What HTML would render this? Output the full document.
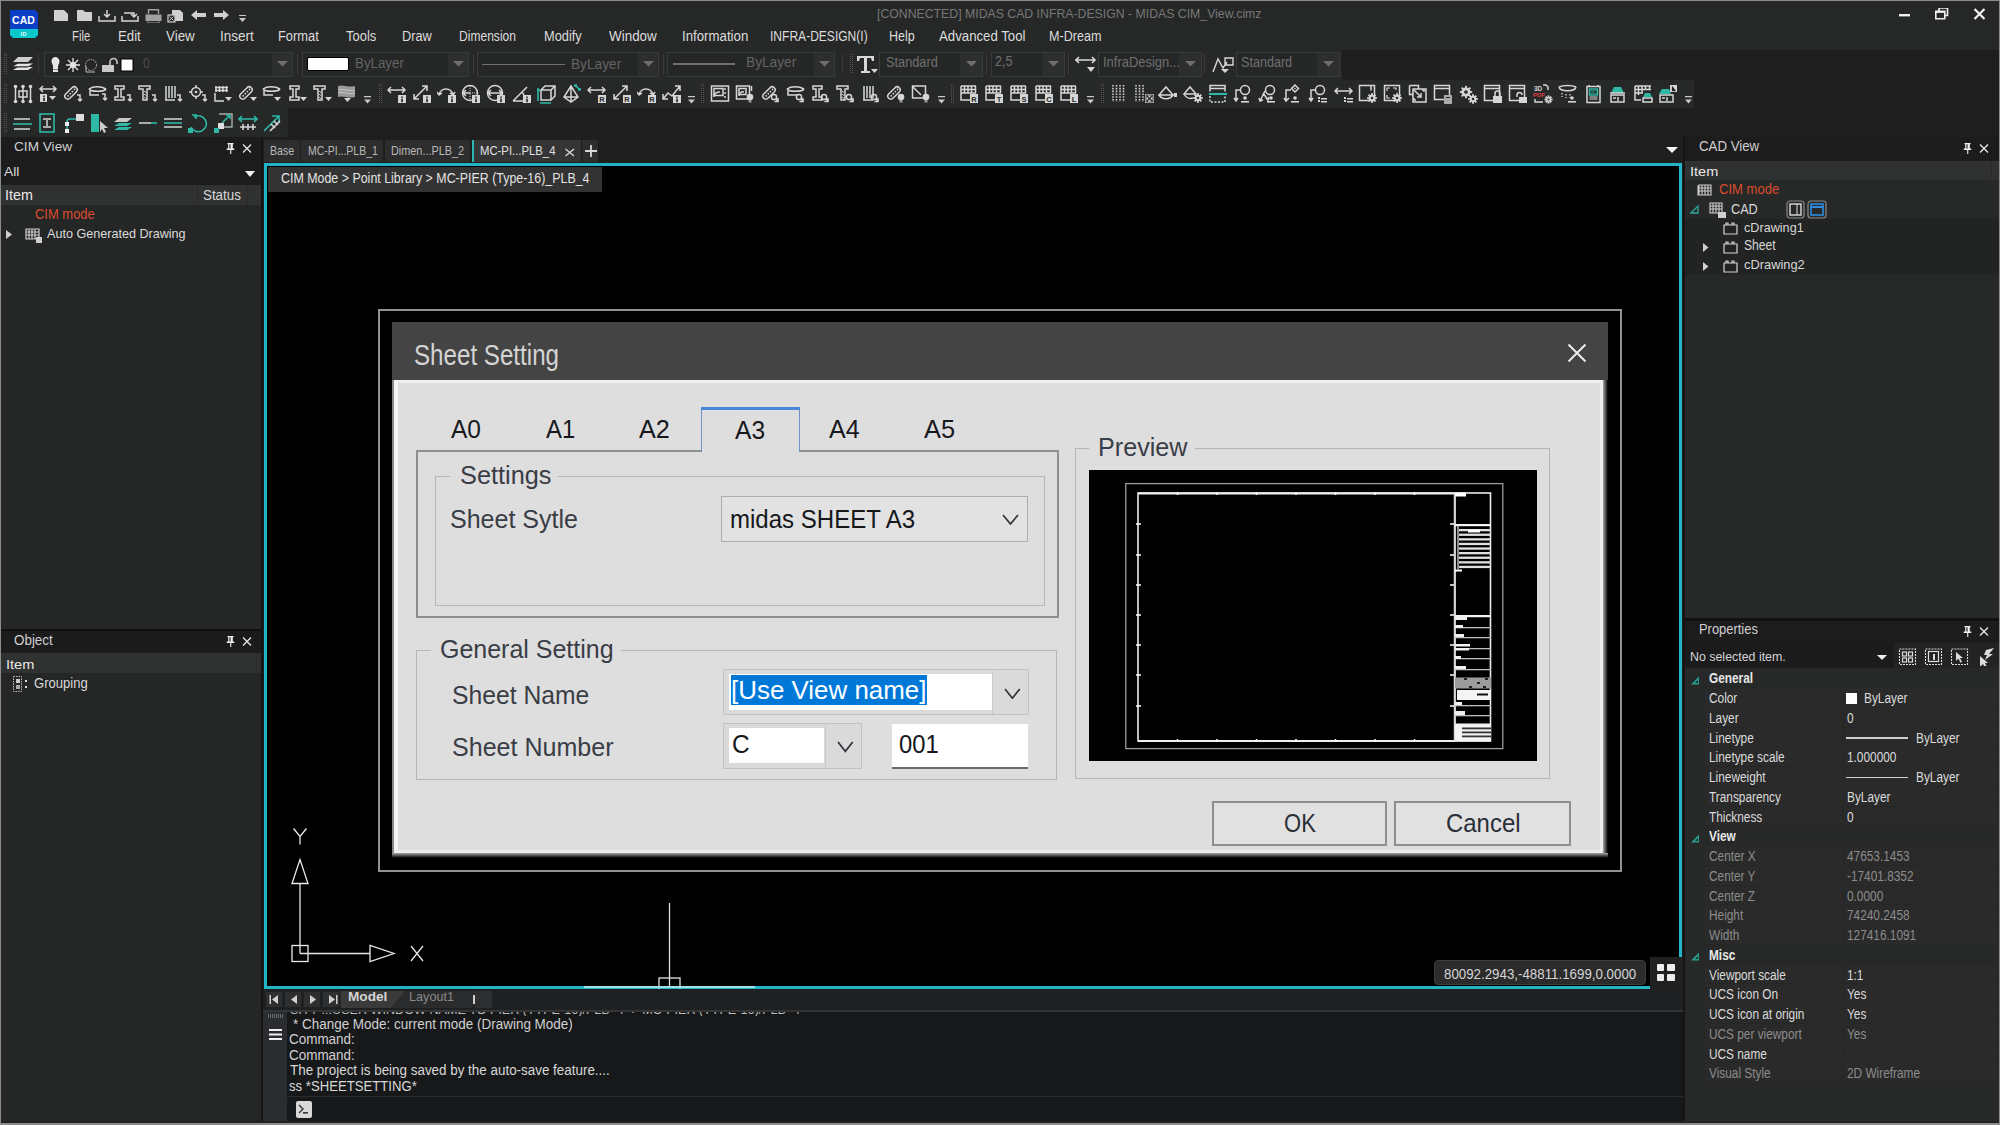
<!DOCTYPE html>
<html><head><meta charset="utf-8">
<style>
*{box-sizing:border-box;margin:0;padding:0}
html,body{width:2000px;height:1125px;overflow:hidden;background:#8c8c8c}
body{font-family:"Liberation Sans",sans-serif;position:relative}
.a{position:absolute;display:block}
.t{position:absolute;white-space:nowrap;line-height:1;transform-origin:0 0}
</style></head><body>
<div class="a" style="left:1px;top:1px;width:1998px;height:1122px;background:#1e1e1e;"></div>
<div class="a" style="left:1px;top:1px;width:1998px;height:49px;background:#262727;"></div>
<div class="a" style="left:1px;top:50px;width:1341px;height:30px;background:#272828;"></div>
<div class="a" style="left:1px;top:80px;width:1693px;height:28px;background:#272828;"></div>
<div class="a" style="left:1px;top:108px;width:287px;height:29px;background:#272828;"></div>
<svg class="a" style="left:9px;top:9px;" width="30" height="30" viewBox="0 0 30 30"><path d="M1 1h25l3 3v22l-3 3H4l-3-3z" fill="#0a3ec4"/><path d="M1 20h28v6l-3 3H4l-3-3z" fill="#0ac8cc"/><text x="14.5" y="14.8" font-family="Liberation Sans" font-weight="bold" font-size="10" fill="#fff" text-anchor="middle" transform="translate(14.5 0) scale(1.05 1) translate(-14.5 0)">CAD</text><text x="14.5" y="27" font-family="Liberation Sans" font-weight="bold" font-size="6" fill="#d8ffff" text-anchor="middle">ID</text></svg>
<svg class="a" style="left:53px;top:9px;" width="16" height="13" viewBox="0 0 16 13"><path fill="#d0d0d0" d="M1 1h10l4 4v7H1z"/></svg>
<svg class="a" style="left:76px;top:9px;" width="17" height="13" viewBox="0 0 17 13"><path fill="#d0d0d0" d="M1 1h6l2 2h7v9H1z"/></svg>
<svg class="a" style="left:98px;top:9px;" width="18" height="14" viewBox="0 0 18 14"><path stroke="#d6d6d6" fill="none" stroke-width="1.5" d="M1 7v5h16V7M9 1v7M6 5l3 3 3-3"/></svg>
<svg class="a" style="left:121px;top:9px;" width="18" height="14" viewBox="0 0 18 14"><path stroke="#d6d6d6" fill="none" stroke-width="1.5" d="M1 7v5h16V7M3 4h10v4M10 5l3 3 3-3"/></svg>
<svg class="a" style="left:145px;top:9px;" width="17" height="14" viewBox="0 0 17 14"><path fill="none" stroke="#a0a0a0" stroke-width="1.4" d="M3.5 5V0.7h10V5"/><path fill="#a0a0a0" d="M0.5 5.5h16v6.5h-16z"/><path fill="none" stroke="#a0a0a0" stroke-width="1.2" d="M3 12.5v1.5h11v-1.5"/></svg>
<svg class="a" style="left:167px;top:9px;" width="17" height="14" viewBox="0 0 17 14"><path fill="#d0d0d0" d="M5 1h8l3 3v8H5z"/><rect x="1" y="6" width="7" height="7" fill="#252627" stroke="#d0d0d0" stroke-width="1.2"/><path stroke="#d0d0d0" stroke-width="1" d="M2.5 7.5l4 4M6.5 7.5l-4 4"/></svg>
<svg class="a" style="left:191px;top:9px;" width="15" height="12" viewBox="0 0 15 12"><path fill="#d0d0d0" d="M0 6l6-5v3h9v4H6v3z"/></svg>
<svg class="a" style="left:214px;top:9px;" width="15" height="12" viewBox="0 0 15 12"><path fill="#d0d0d0" d="M15 6l-6-5v3H0v4h9v3z"/></svg>
<svg class="a" style="left:239px;top:15px;" width="7" height="8" viewBox="0 0 7 8"><path fill="#c8c8c8" d="M0 0h7v1H0zM0 3h7l-3.5 4z"/></svg>
<div class="t" style="left:876.50px;top:6.54px;font-size:13.48px;color:#777777;transform:scaleX(0.9115);">[CONNECTED] MIDAS CAD INFRA-DESIGN - MIDAS CIM_View.cimz</div>
<svg class="a" style="left:1898px;top:8px;" width="90" height="14" viewBox="0 0 90 14"><rect x="1" y="6" width="11" height="2.4" fill="#f0f0f0"/><path stroke="#f0f0f0" stroke-width="1.6" fill="none" d="M37.8 3.2h9v7.5h-9zM41 3V0h8.5v7.5h-2.7"/><path stroke="#f0f0f0" stroke-width="1" d="M37.8 4.4h9"/><path stroke="#f0f0f0" stroke-width="2.2" d="M76.5 1l10 10M86.5 1l-10 10"/></svg>
<div class="t" style="left:72.00px;top:29.97px;font-size:13.91px;color:#dcdcdc;transform:scaleX(0.8108);">File</div>
<div class="t" style="left:117.50px;top:29.97px;font-size:13.91px;color:#dcdcdc;transform:scaleX(0.9508);">Edit</div>
<div class="t" style="left:165.50px;top:29.97px;font-size:13.91px;color:#dcdcdc;transform:scaleX(0.9632);">View</div>
<div class="t" style="left:220.00px;top:29.97px;font-size:13.91px;color:#dcdcdc;transform:scaleX(0.9717);">Insert</div>
<div class="t" style="left:277.70px;top:29.97px;font-size:13.91px;color:#dcdcdc;transform:scaleX(0.9253);">Format</div>
<div class="t" style="left:345.50px;top:29.97px;font-size:13.91px;color:#dcdcdc;transform:scaleX(0.9322);">Tools</div>
<div class="t" style="left:402.00px;top:29.97px;font-size:13.91px;color:#dcdcdc;transform:scaleX(0.9168);">Draw</div>
<div class="t" style="left:458.60px;top:29.97px;font-size:13.91px;color:#dcdcdc;transform:scaleX(0.8676);">Dimension</div>
<div class="t" style="left:544.30px;top:29.97px;font-size:13.91px;color:#dcdcdc;transform:scaleX(0.9217);">Modify</div>
<div class="t" style="left:609.00px;top:29.97px;font-size:13.91px;color:#dcdcdc;transform:scaleX(0.9661);">Window</div>
<div class="t" style="left:682.00px;top:29.97px;font-size:13.91px;color:#dcdcdc;transform:scaleX(0.9525);">Information</div>
<div class="t" style="left:769.50px;top:29.97px;font-size:13.91px;color:#dcdcdc;transform:scaleX(0.8660);">INFRA-DESIGN(I)</div>
<div class="t" style="left:889.00px;top:29.97px;font-size:13.91px;color:#dcdcdc;transform:scaleX(0.8999);">Help</div>
<div class="t" style="left:939.00px;top:29.97px;font-size:13.91px;color:#dcdcdc;transform:scaleX(0.9510);">Advanced Tool</div>
<div class="t" style="left:1048.80px;top:29.97px;font-size:13.91px;color:#dcdcdc;transform:scaleX(0.9049);">M-Dream</div>
<svg class="a" style="left:3.5px;top:53px;" width="4" height="22" viewBox="0 0 4 22"><rect x="0" y="0" width="1" height="1" fill="#555"/><rect x="2" y="0" width="1" height="1" fill="#555"/><rect x="0" y="2" width="1" height="1" fill="#555"/><rect x="2" y="2" width="1" height="1" fill="#555"/><rect x="0" y="4" width="1" height="1" fill="#555"/><rect x="2" y="4" width="1" height="1" fill="#555"/><rect x="0" y="6" width="1" height="1" fill="#555"/><rect x="2" y="6" width="1" height="1" fill="#555"/><rect x="0" y="8" width="1" height="1" fill="#555"/><rect x="2" y="8" width="1" height="1" fill="#555"/><rect x="0" y="10" width="1" height="1" fill="#555"/><rect x="2" y="10" width="1" height="1" fill="#555"/><rect x="0" y="12" width="1" height="1" fill="#555"/><rect x="2" y="12" width="1" height="1" fill="#555"/><rect x="0" y="14" width="1" height="1" fill="#555"/><rect x="2" y="14" width="1" height="1" fill="#555"/><rect x="0" y="16" width="1" height="1" fill="#555"/><rect x="2" y="16" width="1" height="1" fill="#555"/><rect x="0" y="18" width="1" height="1" fill="#555"/><rect x="2" y="18" width="1" height="1" fill="#555"/><rect x="0" y="20" width="1" height="1" fill="#555"/><rect x="2" y="20" width="1" height="1" fill="#555"/></svg>
<svg class="a" style="left:12px;top:55px;" width="22" height="18" viewBox="0 0 22 18"><path fill="#e4e4e4" d="M1 15l5-3h15l-5 3z M1 11.5l5-3h15l-5 3z"/><path fill="#cfcfcf" d="M1 7l5-5h15l-5 5z"/><path stroke="#262728" stroke-width="1" d="M1 8h15M1 12h15"/></svg>
<div class="a" style="left:38px;top:54px;width:1px;height:20px;background:#3a3a3a;"></div>
<div class="a" style="left:44px;top:52px;width:249px;height:25px;background:#252626;border:1px solid #393a3a;"></div>
<div class="a" style="left:272px;top:53px;width:20px;height:23px;background:#2d2e2e;"></div>
<svg class="a" style="left:276.5px;top:61.4px;" width="11" height="6" viewBox="0 0 11 6"><path fill="#6e6e6e" d="M0 0h11L5.5 5.5z"/></svg>
<svg class="a" style="left:50px;top:56px;" width="90" height="18" viewBox="0 0 90 18"><path fill="#e6e6e6" d="M5 1a4.5 4.5 0 0 1 4.5 4.5c0 2-1.5 3-1.5 5v3H3v-3c0-2-1.5-3-1.5-5A4.5 4.5 0 0 1 5 1z M3 14h5v2H3z"/><g stroke="#e6e6e6" stroke-width="1.3"><path d="M23 2v14M16 9h14M18 4l10 10M28 4L18 14"/></g><circle cx="23" cy="9" r="3" fill="#e6e6e6"/><circle cx="41" cy="9" r="5.5" fill="none" stroke="#bbb" stroke-dasharray="1.5 1"/><path stroke="#bbb" fill="none" d="M36 10v6h9"/><path fill="#c8c8c8" d="M52 9h12v7H52z"/><path stroke="#c8c8c8" stroke-width="1.6" fill="none" d="M60 9V6a3.5 3.5 0 0 1 7 0v2"/><rect x="71" y="3" width="12" height="12" fill="#fff" stroke="#000" stroke-width="1"/></svg>
<div class="t" style="left:143.10px;top:56.45px;font-size:14.06px;color:#4e4e4e;transform:scaleX(0.8889);">0</div>
<div class="a" style="left:297px;top:54px;width:1px;height:20px;background:#3a3a3a;"></div>
<div class="a" style="left:302px;top:52px;width:167px;height:25px;background:#252626;border:1px solid #393a3a;"></div>
<div class="a" style="left:448px;top:53px;width:20px;height:23px;background:#2d2e2e;"></div>
<svg class="a" style="left:452.5px;top:61.4px;" width="11" height="6" viewBox="0 0 11 6"><path fill="#6e6e6e" d="M0 0h11L5.5 5.5z"/></svg>
<div class="a" style="left:306.8px;top:57px;width:42px;height:14.4px;background:#fff;border:1.5px solid #000;border-radius:2px;"></div>
<div class="t" style="left:354.90px;top:56.45px;font-size:14.06px;color:#646464;transform:scaleX(0.9482);">ByLayer</div>
<div class="a" style="left:473px;top:54px;width:1px;height:20px;background:#3a3a3a;"></div>
<div class="a" style="left:477px;top:52px;width:182px;height:25px;background:#252626;border:1px solid #393a3a;"></div>
<div class="a" style="left:638px;top:53px;width:20px;height:23px;background:#2d2e2e;"></div>
<svg class="a" style="left:642.5px;top:61.4px;" width="11" height="6" viewBox="0 0 11 6"><path fill="#6e6e6e" d="M0 0h11L5.5 5.5z"/></svg>
<div class="a" style="left:482.4px;top:64.3px;width:82.6px;height:1.2px;background:#707070;"></div>
<div class="t" style="left:570.70px;top:57.05px;font-size:14.06px;color:#646464;transform:scaleX(0.9738);">ByLayer</div>
<div class="a" style="left:663px;top:54px;width:1px;height:20px;background:#3a3a3a;"></div>
<div class="a" style="left:667px;top:52px;width:168px;height:25px;background:#252626;border:1px solid #393a3a;"></div>
<div class="a" style="left:814px;top:53px;width:20px;height:23px;background:#2d2e2e;"></div>
<svg class="a" style="left:818.5px;top:61.4px;" width="11" height="6" viewBox="0 0 11 6"><path fill="#6e6e6e" d="M0 0h11L5.5 5.5z"/></svg>
<div class="a" style="left:673px;top:63.4px;width:62px;height:1.2px;background:#707070;"></div>
<div class="t" style="left:745.50px;top:55.15px;font-size:14.06px;color:#646464;transform:scaleX(0.9758);">ByLayer</div>
<div class="a" style="left:842px;top:54px;width:1px;height:20px;background:#3a3a3a;"></div>
<svg class="a" style="left:849.5px;top:54px;" width="4" height="20" viewBox="0 0 4 20"><rect x="0" y="0" width="1" height="1" fill="#555"/><rect x="2" y="0" width="1" height="1" fill="#555"/><rect x="0" y="2" width="1" height="1" fill="#555"/><rect x="2" y="2" width="1" height="1" fill="#555"/><rect x="0" y="4" width="1" height="1" fill="#555"/><rect x="2" y="4" width="1" height="1" fill="#555"/><rect x="0" y="6" width="1" height="1" fill="#555"/><rect x="2" y="6" width="1" height="1" fill="#555"/><rect x="0" y="8" width="1" height="1" fill="#555"/><rect x="2" y="8" width="1" height="1" fill="#555"/><rect x="0" y="10" width="1" height="1" fill="#555"/><rect x="2" y="10" width="1" height="1" fill="#555"/><rect x="0" y="12" width="1" height="1" fill="#555"/><rect x="2" y="12" width="1" height="1" fill="#555"/><rect x="0" y="14" width="1" height="1" fill="#555"/><rect x="2" y="14" width="1" height="1" fill="#555"/><rect x="0" y="16" width="1" height="1" fill="#555"/><rect x="2" y="16" width="1" height="1" fill="#555"/><rect x="0" y="18" width="1" height="1" fill="#555"/><rect x="2" y="18" width="1" height="1" fill="#555"/></svg>
<svg class="a" style="left:855px;top:54px;" width="23" height="20" viewBox="0 0 23 20"><path fill="#d8d8d8" d="M2 2h17v5h-2l-1-3h-4v13h3v2H6v-2h3V4H5L4 7H2z"/><path fill="#d8d8d8" d="M16 15h7l-3.5 4z"/></svg>
<div class="a" style="left:879px;top:52px;width:104px;height:25px;background:#252626;border:1px solid #393a3a;"></div>
<div class="a" style="left:960px;top:53px;width:22px;height:23px;background:#2d2e2e;"></div>
<svg class="a" style="left:965.5px;top:61.4px;" width="11" height="6" viewBox="0 0 11 6"><path fill="#6e6e6e" d="M0 0h11L5.5 5.5z"/></svg>
<div class="t" style="left:885.70px;top:55.35px;font-size:14.06px;color:#707070;transform:scaleX(0.9091);">Standard</div>
<div class="a" style="left:986px;top:54px;width:1px;height:20px;background:#3a3a3a;"></div>
<div class="a" style="left:991px;top:52px;width:74px;height:25px;background:#252626;border:1px solid #393a3a;"></div>
<div class="a" style="left:1042px;top:53px;width:22px;height:23px;background:#2d2e2e;"></div>
<svg class="a" style="left:1047.5px;top:61.4px;" width="11" height="6" viewBox="0 0 11 6"><path fill="#6e6e6e" d="M0 0h11L5.5 5.5z"/></svg>
<div class="t" style="left:995.40px;top:53.55px;font-size:14.06px;color:#707070;transform:scaleX(0.9038);">2,5</div>
<div class="a" style="left:1068px;top:54px;width:1px;height:20px;background:#3a3a3a;"></div>
<svg class="a" style="left:1075px;top:53px;" width="22" height="22" viewBox="0 0 22 22"><path stroke="#d8d8d8" stroke-width="1.6" fill="none" d="M1 7h19M4 4L1 7l3 3M17 4l3 3-3 3"/><path fill="#d8d8d8" d="M12 14h8l-4 5z"/></svg>
<div class="a" style="left:1098px;top:52px;width:104px;height:25px;background:#252626;border:1px solid #393a3a;"></div>
<div class="a" style="left:1179px;top:53px;width:22px;height:23px;background:#2d2e2e;"></div>
<svg class="a" style="left:1184.5px;top:61.4px;" width="11" height="6" viewBox="0 0 11 6"><path fill="#6e6e6e" d="M0 0h11L5.5 5.5z"/></svg>
<div class="t" style="left:1103.30px;top:55.35px;font-size:14.06px;color:#707070;transform:scaleX(0.9219);">InfraDesign...</div>
<div class="a" style="left:1204px;top:54px;width:1px;height:20px;background:#3a3a3a;"></div>
<svg class="a" style="left:1211px;top:54px;" width="23" height="20" viewBox="0 0 23 20"><path stroke="#d8d8d8" stroke-width="1.4" fill="none" d="M2 18l5-13 5 9 4-6M14 4h8v7h-8z"/><path fill="#d8d8d8" d="M10 15h8l-4 4z"/></svg>
<div class="a" style="left:1236px;top:52px;width:104px;height:25px;background:#252626;border:1px solid #393a3a;"></div>
<div class="a" style="left:1317px;top:53px;width:22px;height:23px;background:#2d2e2e;"></div>
<svg class="a" style="left:1322.5px;top:61.4px;" width="11" height="6" viewBox="0 0 11 6"><path fill="#6e6e6e" d="M0 0h11L5.5 5.5z"/></svg>
<div class="t" style="left:1241.40px;top:55.35px;font-size:14.06px;color:#707070;transform:scaleX(0.8966);">Standard</div>
<svg class="a" style="left:3.5px;top:84px;" width="4" height="19" viewBox="0 0 4 19"><rect x="0" y="0" width="1" height="1" fill="#555"/><rect x="2" y="0" width="1" height="1" fill="#555"/><rect x="0" y="2" width="1" height="1" fill="#555"/><rect x="2" y="2" width="1" height="1" fill="#555"/><rect x="0" y="4" width="1" height="1" fill="#555"/><rect x="2" y="4" width="1" height="1" fill="#555"/><rect x="0" y="6" width="1" height="1" fill="#555"/><rect x="2" y="6" width="1" height="1" fill="#555"/><rect x="0" y="8" width="1" height="1" fill="#555"/><rect x="2" y="8" width="1" height="1" fill="#555"/><rect x="0" y="10" width="1" height="1" fill="#555"/><rect x="2" y="10" width="1" height="1" fill="#555"/><rect x="0" y="12" width="1" height="1" fill="#555"/><rect x="2" y="12" width="1" height="1" fill="#555"/><rect x="0" y="14" width="1" height="1" fill="#555"/><rect x="2" y="14" width="1" height="1" fill="#555"/><rect x="0" y="16" width="1" height="1" fill="#555"/><rect x="2" y="16" width="1" height="1" fill="#555"/><rect x="0" y="18" width="1" height="1" fill="#555"/><rect x="2" y="18" width="1" height="1" fill="#555"/></svg>
<svg class="a" style="left:13px;top:83.5px;" width="20" height="20" viewBox="0 0 20 20"><path stroke="#d6d6d6" fill="none" stroke-width="1.5" d="M2.5 3v14M10 3v14M17.5 3v14M6 7h8v6H6z"/><g fill="#d6d6d6"><circle cx="2.5" cy="2.5" r="1.8"/><circle cx="10" cy="2.5" r="1.8"/><circle cx="17.5" cy="2.5" r="1.8"/><circle cx="2.5" cy="17.5" r="1.8"/><circle cx="10" cy="17.5" r="1.8"/><circle cx="17.5" cy="17.5" r="1.8"/></g></svg>
<svg class="a" style="left:38px;top:83.5px;" width="20" height="20" viewBox="0 0 20 20"><path stroke="#d6d6d6" fill="none" stroke-width="1.5" d="M2 5h16M5 2L2 5l3 3M15 2l3 3-3 3"/><rect x="2" y="10" width="7" height="8" fill="#d6d6d6"/><rect x="5.2" y="11.5" width="1.6" height="1.4" fill="#262728"/><rect x="5.2" y="13.6" width="1.6" height="3.6" fill="#262728"/><path fill="#d6d6d6" d="M11 12h7l-3.5 4z"/></svg>
<svg class="a" style="left:63px;top:83.5px;" width="20" height="20" viewBox="0 0 20 20"><g transform="rotate(-45 8 9)"><rect x="0.5" y="6" width="15" height="6" rx="3" stroke="#d6d6d6" fill="none" stroke-width="1.5"/><circle cx="4" cy="9" r="0.9" fill="#d6d6d6"/><circle cx="7" cy="9" r="0.9" fill="#d6d6d6"/><circle cx="10" cy="9" r="0.9" fill="#d6d6d6"/><circle cx="13" cy="9" r="0.9" fill="#d6d6d6"/></g><path stroke="#d6d6d6" fill="none" stroke-width="1.5" d="M14 11h3v6M15 15l2 2 2-2"/></svg>
<svg class="a" style="left:88px;top:83.5px;" width="20" height="20" viewBox="0 0 20 20"><path stroke="#d6d6d6" fill="none" stroke-width="1.5" d="M1 5c4-3 12-3 17 0M1 5c2 3 15 3 17 0M2 7v4h9"/><path stroke="#d6d6d6" fill="none" stroke-width="1.5" d="M14 10h3v6M15 14l2 2 2-2"/></svg>
<svg class="a" style="left:113px;top:83.5px;" width="20" height="20" viewBox="0 0 20 20"><path stroke="#d6d6d6" fill="none" stroke-width="1.5" d="M2 2h9v3H8v8h3v3H2v-3h3V5H2z"/><path stroke="#d6d6d6" fill="none" stroke-width="1.5" d="M14 11h3v6M15 15l2 2 2-2"/></svg>
<svg class="a" style="left:138px;top:83.5px;" width="20" height="20" viewBox="0 0 20 20"><path stroke="#d6d6d6" fill="none" stroke-width="1.5" d="M1 2h11v3H9v11H5V5H1z"/><path stroke="#d6d6d6" stroke-width="1" d="M6 7l2 1.5M6 10l2 1.5M6 13l2 1.5"/><path stroke="#d6d6d6" fill="none" stroke-width="1.5" d="M14 11h3v6M15 15l2 2 2-2"/></svg>
<svg class="a" style="left:163px;top:83.5px;" width="20" height="20" viewBox="0 0 20 20"><path stroke="#d6d6d6" fill="none" stroke-width="1.5" d="M2 16h10M3 16V2M6 14V2M9 14V2M12 14V2"/><path stroke="#d6d6d6" fill="none" stroke-width="1.5" d="M14 11h3v6M15 15l2 2 2-2"/></svg>
<svg class="a" style="left:188px;top:83.5px;" width="20" height="20" viewBox="0 0 20 20"><circle cx="8" cy="8" r="4.5" stroke="#d6d6d6" fill="none" stroke-width="1.5"/><circle cx="8" cy="8" r="1.3" fill="#d6d6d6"/><path stroke="#d6d6d6" fill="none" stroke-width="1.5" d="M8 1v2.5M8 12.5V15M1 8h2.5M12.5 8H15"/><path stroke="#d6d6d6" fill="none" stroke-width="1.5" d="M14 11h3v6M15 15l2 2 2-2"/></svg>
<svg class="a" style="left:213px;top:83.5px;" width="20" height="20" viewBox="0 0 20 20"><path stroke="#d6d6d6" fill="none" stroke-width="1.5" stroke-width="1.3" d="M3 2v6M6.5 2v6M10 2v6M13.5 2v6M2 3.5h13M2 6.5h13M2 9v8h9"/><path fill="#d6d6d6" d="M12 13h7l-3.5 4z"/></svg>
<svg class="a" style="left:238px;top:83.5px;" width="20" height="20" viewBox="0 0 20 20"><g transform="rotate(-45 8 9)"><rect x="0.5" y="6" width="15" height="6" rx="3" stroke="#d6d6d6" fill="none" stroke-width="1.5"/><circle cx="4" cy="9" r="0.9" fill="#d6d6d6"/><circle cx="7" cy="9" r="0.9" fill="#d6d6d6"/><circle cx="10" cy="9" r="0.9" fill="#d6d6d6"/><circle cx="13" cy="9" r="0.9" fill="#d6d6d6"/></g><path fill="#d6d6d6" d="M12 13h7l-3.5 4z"/></svg>
<svg class="a" style="left:262px;top:83.5px;" width="20" height="20" viewBox="0 0 20 20"><path stroke="#d6d6d6" fill="none" stroke-width="1.5" d="M1 5c4-3 12-3 17 0M1 5c2 3 15 3 17 0M2 7v4h9"/><path fill="#d6d6d6" d="M12 13h7l-3.5 4z"/></svg>
<svg class="a" style="left:288px;top:83.5px;" width="20" height="20" viewBox="0 0 20 20"><path stroke="#d6d6d6" fill="none" stroke-width="1.5" d="M2 2h9v3H8v8h3v3H2v-3h3V5H2z"/><path fill="#d6d6d6" d="M12 13h7l-3.5 4z"/></svg>
<svg class="a" style="left:313px;top:83.5px;" width="20" height="20" viewBox="0 0 20 20"><path stroke="#d6d6d6" fill="none" stroke-width="1.5" d="M1 2h11v3H9v11H5V5H1z"/><path stroke="#d6d6d6" stroke-width="1" d="M6 7l2 1.5M6 10l2 1.5M6 13l2 1.5"/><path fill="#d6d6d6" d="M12 13h7l-3.5 4z"/></svg>
<svg class="a" style="left:337px;top:83.5px;" width="20" height="20" viewBox="0 0 20 20"><path fill="#9a9a9a" d="M1 2c5-2 9 2 17 0v11c-8 2-12-2-17 0z"/><path stroke="#c8c8c8" fill="none" stroke-width="1" d="M1 6c5-2 9 2 17 0M1 9c5-2 9 2 17 0"/><path fill="#d6d6d6" d="M7 14h7l-3.5 4z"/></svg>
<svg class="a" style="left:387px;top:83.5px;" width="20" height="20" viewBox="0 0 20 20"><path stroke="#d6d6d6" fill="none" stroke-width="1.5" d="M1 6h17M4 3L1 6l3 3M15 3l3 3-3 3"/><rect x="11" y="11" width="8" height="8" fill="#d6d6d6"/><rect x="14.2" y="12.5" width="1.6" height="1.4" fill="#262728"/><rect x="14.2" y="14.6" width="1.6" height="3.6" fill="#262728"/></svg>
<svg class="a" style="left:412px;top:83.5px;" width="20" height="20" viewBox="0 0 20 20"><path stroke="#d6d6d6" fill="none" stroke-width="1.5" d="M2 15L15 2M2 10v5h5M10 2h5v5"/><rect x="11" y="11" width="8" height="8" fill="#d6d6d6"/><rect x="14.2" y="12.5" width="1.6" height="1.4" fill="#262728"/><rect x="14.2" y="14.6" width="1.6" height="3.6" fill="#262728"/></svg>
<svg class="a" style="left:437px;top:83.5px;" width="20" height="20" viewBox="0 0 20 20"><path stroke="#d6d6d6" fill="none" stroke-width="1.5" d="M2 11c2-8 12-8 14 0M0 8l2 3 3-2M13 9l3 2 2-3"/><rect x="11" y="11" width="8" height="8" fill="#d6d6d6"/><rect x="14.2" y="12.5" width="1.6" height="1.4" fill="#262728"/><rect x="14.2" y="14.6" width="1.6" height="3.6" fill="#262728"/></svg>
<svg class="a" style="left:461px;top:83.5px;" width="20" height="20" viewBox="0 0 20 20"><circle cx="9" cy="9" r="7.5" stroke="#d6d6d6" fill="none" stroke-width="1.5"/><path stroke="#d6d6d6" fill="none" stroke-width="1.5" d="M2 9h7M5 6L2 9l3 3"/><path stroke="#d6d6d6" stroke-dasharray="1 1" d="M9 2v14M9 9h7"/><rect x="11" y="11" width="8" height="8" fill="#d6d6d6"/><rect x="14.2" y="12.5" width="1.6" height="1.4" fill="#262728"/><rect x="14.2" y="14.6" width="1.6" height="3.6" fill="#262728"/></svg>
<svg class="a" style="left:486px;top:83.5px;" width="20" height="20" viewBox="0 0 20 20"><circle cx="9" cy="9" r="7.5" stroke="#d6d6d6" fill="none" stroke-width="1.5"/><path stroke="#d6d6d6" fill="none" stroke-width="1.5" d="M2 9h14M5 6L2 9l3 3M13 6l3 3-3 3"/><rect x="11" y="11" width="8" height="8" fill="#d6d6d6"/><rect x="14.2" y="12.5" width="1.6" height="1.4" fill="#262728"/><rect x="14.2" y="14.6" width="1.6" height="3.6" fill="#262728"/></svg>
<svg class="a" style="left:512px;top:83.5px;" width="20" height="20" viewBox="0 0 20 20"><path stroke="#d6d6d6" fill="none" stroke-width="1.5" d="M1 17L15 3M1 17h11M10 8a6 6 0 0 1 2 5"/><rect x="11" y="11" width="8" height="8" fill="#d6d6d6"/><rect x="14.2" y="12.5" width="1.6" height="1.4" fill="#262728"/><rect x="14.2" y="14.6" width="1.6" height="3.6" fill="#262728"/></svg>
<svg class="a" style="left:537px;top:83.5px;" width="20" height="20" viewBox="0 0 20 20"><path stroke="#d6d6d6" fill="none" stroke-width="1.5" d="M4 6h10v10H4zM4 6l4-4h10v10l-4 4M14 6l4-4"/><path stroke="#2fb8a6" fill="none" stroke-width="1.6" d="M1 5v12M3 19h11M-1 7l2-2 2 2M1 17"/></svg>
<svg class="a" style="left:562px;top:83.5px;" width="20" height="20" viewBox="0 0 20 20"><path stroke="#d6d6d6" fill="none" stroke-width="1.5" d="M9 2L2 13l7 5 7-5zM9 2v16M2 13h14"/><path stroke="#2fb8a6" fill="none" stroke-width="1.7" d="M13 1l5 5M13 3V1h2M18 4v2h-2"/></svg>
<svg class="a" style="left:587px;top:83.5px;" width="20" height="20" viewBox="0 0 20 20"><path stroke="#d6d6d6" fill="none" stroke-width="1.5" d="M1 6h17M4 3L1 6l3 3M15 3l3 3-3 3"/><rect x="11" y="11" width="8" height="8" fill="#d6d6d6"/><text x="15.0" y="17.7" font-family="Liberation Sans" font-weight="bold" font-size="7.5" fill="#262728" text-anchor="middle">R</text></svg>
<svg class="a" style="left:612px;top:83.5px;" width="20" height="20" viewBox="0 0 20 20"><path stroke="#d6d6d6" fill="none" stroke-width="1.5" d="M2 15L15 2M2 10v5h5M10 2h5v5"/><rect x="11" y="11" width="8" height="8" fill="#d6d6d6"/><text x="15.0" y="17.7" font-family="Liberation Sans" font-weight="bold" font-size="7.5" fill="#262728" text-anchor="middle">R</text></svg>
<svg class="a" style="left:637px;top:83.5px;" width="20" height="20" viewBox="0 0 20 20"><path stroke="#d6d6d6" fill="none" stroke-width="1.5" d="M2 11c2-8 12-8 14 0M0 8l2 3 3-2M13 9l3 2 2-3"/><rect x="11" y="11" width="8" height="8" fill="#d6d6d6"/><text x="15.0" y="17.7" font-family="Liberation Sans" font-weight="bold" font-size="7.5" fill="#262728" text-anchor="middle">R</text></svg>
<svg class="a" style="left:662px;top:83.5px;" width="20" height="20" viewBox="0 0 20 20"><path stroke="#d6d6d6" fill="none" stroke-width="1.5" d="M1 15l5-6 4 3 8-10M13 2h5v5M1 10v5h5"/><rect x="11" y="11" width="8" height="8" fill="#d6d6d6"/><rect x="14.2" y="12.5" width="1.6" height="1.4" fill="#262728"/><rect x="14.2" y="14.6" width="1.6" height="3.6" fill="#262728"/></svg>
<svg class="a" style="left:710px;top:83.5px;" width="20" height="20" viewBox="0 0 20 20"><rect x="1.5" y="2" width="17" height="15" stroke="#d6d6d6" fill="none" stroke-width="1.5"/><rect x="4" y="4.5" width="9" height="7" stroke="#d6d6d6" fill="none" stroke-width="1.5" stroke-width="1.2"/><path stroke="#d6d6d6" fill="none" stroke-width="1.5" stroke-width="1.2" d="M4 13a5 5 0 0 1 6-5M15 4v2M15 8v2M15 12v2"/></svg>
<svg class="a" style="left:735px;top:83.5px;" width="20" height="20" viewBox="0 0 20 20"><path stroke="#d6d6d6" fill="none" stroke-width="1.5" d="M1.5 2h13v13h-13z"/><rect x="4" y="4.5" width="7" height="6" stroke="#d6d6d6" fill="none" stroke-width="1.5" stroke-width="1.2"/><path stroke="#d6d6d6" fill="none" stroke-width="1.5" stroke-width="1.2" d="M4 12a4 4 0 0 1 5-4M16.5 2v5"/><circle cx="15" cy="13" r="3.3" fill="#d6d6d6"/><rect x="13.5" y="16" width="3" height="2.5" fill="#9a9a9a"/></svg>
<svg class="a" style="left:761px;top:83.5px;" width="20" height="20" viewBox="0 0 20 20"><g transform="rotate(-45 8 9)"><rect x="0.5" y="6" width="15" height="6" rx="3" stroke="#d6d6d6" fill="none" stroke-width="1.5"/><circle cx="4" cy="9" r="0.9" fill="#d6d6d6"/><circle cx="7" cy="9" r="0.9" fill="#d6d6d6"/><circle cx="10" cy="9" r="0.9" fill="#d6d6d6"/><circle cx="13" cy="9" r="0.9" fill="#d6d6d6"/></g><circle cx="13" cy="13" r="2.6" stroke="#d6d6d6" fill="none" stroke-width="1.5" stroke-width="1.3"/><path stroke="#d6d6d6" fill="none" stroke-width="1.5" d="M15 15l2.5 2.5M17 14v3.5h-3.5" stroke-width="1.2"/></svg>
<svg class="a" style="left:786px;top:83.5px;" width="20" height="20" viewBox="0 0 20 20"><path stroke="#d6d6d6" fill="none" stroke-width="1.5" d="M1 5c4-3 12-3 17 0M1 5c2 3 15 3 17 0M2 7v4h9"/><circle cx="13" cy="13" r="2.6" stroke="#d6d6d6" fill="none" stroke-width="1.5" stroke-width="1.3"/><path stroke="#d6d6d6" fill="none" stroke-width="1.5" d="M15 15l2.5 2.5M17 14v3.5h-3.5" stroke-width="1.2"/></svg>
<svg class="a" style="left:811px;top:83.5px;" width="20" height="20" viewBox="0 0 20 20"><path stroke="#d6d6d6" fill="none" stroke-width="1.5" d="M2 2h9v3H8v8h3v3H2v-3h3V5H2z"/><circle cx="13" cy="13" r="2.6" stroke="#d6d6d6" fill="none" stroke-width="1.5" stroke-width="1.3"/><path stroke="#d6d6d6" fill="none" stroke-width="1.5" d="M15 15l2.5 2.5M17 14v3.5h-3.5" stroke-width="1.2"/></svg>
<svg class="a" style="left:836px;top:83.5px;" width="20" height="20" viewBox="0 0 20 20"><path stroke="#d6d6d6" fill="none" stroke-width="1.5" d="M1 2h11v3H9v11H5V5H1z"/><path stroke="#d6d6d6" stroke-width="1" d="M6 7l2 1.5M6 10l2 1.5M6 13l2 1.5"/><circle cx="13" cy="13" r="2.6" stroke="#d6d6d6" fill="none" stroke-width="1.5" stroke-width="1.3"/><path stroke="#d6d6d6" fill="none" stroke-width="1.5" d="M15 15l2.5 2.5M17 14v3.5h-3.5" stroke-width="1.2"/></svg>
<svg class="a" style="left:861px;top:83.5px;" width="20" height="20" viewBox="0 0 20 20"><path stroke="#d6d6d6" fill="none" stroke-width="1.5" d="M2 16h10M3 16V2M6 14V2M9 14V2M12 14V2"/><circle cx="13" cy="13" r="2.6" stroke="#d6d6d6" fill="none" stroke-width="1.5" stroke-width="1.3"/><path stroke="#d6d6d6" fill="none" stroke-width="1.5" d="M15 15l2.5 2.5M17 14v3.5h-3.5" stroke-width="1.2"/></svg>
<svg class="a" style="left:886px;top:83.5px;" width="20" height="20" viewBox="0 0 20 20"><g transform="rotate(-45 8 9)"><rect x="0.5" y="6" width="15" height="6" rx="3" stroke="#d6d6d6" fill="none" stroke-width="1.5"/><circle cx="4" cy="9" r="0.9" fill="#d6d6d6"/><circle cx="7" cy="9" r="0.9" fill="#d6d6d6"/><circle cx="10" cy="9" r="0.9" fill="#d6d6d6"/><circle cx="13" cy="9" r="0.9" fill="#d6d6d6"/></g><circle cx="15" cy="13" r="3.3" fill="#d6d6d6"/><rect x="13.5" y="16" width="3" height="2.5" fill="#9a9a9a"/></svg>
<svg class="a" style="left:911px;top:83.5px;" width="20" height="20" viewBox="0 0 20 20"><path stroke="#d6d6d6" fill="none" stroke-width="1.5" d="M1.5 2h13v12h-13zM2 3l8 8"/><circle cx="15" cy="13" r="3.3" fill="#d6d6d6"/><rect x="13.5" y="16" width="3" height="2.5" fill="#9a9a9a"/></svg>
<svg class="a" style="left:959px;top:83.5px;" width="20" height="20" viewBox="0 0 20 20"><path stroke="#d6d6d6" fill="none" stroke-width="1.5" d="M2 2h15M2 5.5h15M2 9h15M2 2v14h9M5.5 2v7M9 2v7M12.5 2v7M16.5 2v7" stroke-width="1.3"/><rect x="11" y="10" width="8" height="9" fill="#d6d6d6"/><text x="15.0" y="17.7" font-family="Liberation Sans" font-weight="bold" font-size="7.5" fill="#262728" text-anchor="middle">R</text></svg>
<svg class="a" style="left:984px;top:83.5px;" width="20" height="20" viewBox="0 0 20 20"><path stroke="#d6d6d6" fill="none" stroke-width="1.5" d="M2 2h15M2 5.5h15M2 9h15M2 2v14h9M5.5 2v7M9 2v7M12.5 2v7M16.5 2v7" stroke-width="1.3"/><rect x="11" y="10" width="8" height="9" fill="#d6d6d6"/><text x="15.0" y="17.7" font-family="Liberation Sans" font-weight="bold" font-size="7.5" fill="#262728" text-anchor="middle">T</text></svg>
<svg class="a" style="left:1009px;top:83.5px;" width="20" height="20" viewBox="0 0 20 20"><path stroke="#d6d6d6" fill="none" stroke-width="1.5" d="M2 2h15M2 5.5h15M2 9h15M2 2v14h9M5.5 2v7M9 2v7M12.5 2v7M16.5 2v7" stroke-width="1.3"/><rect x="11" y="10" width="8" height="9" fill="#d6d6d6"/><text x="15.0" y="17.7" font-family="Liberation Sans" font-weight="bold" font-size="7.5" fill="#262728" text-anchor="middle">S</text></svg>
<svg class="a" style="left:1034px;top:83.5px;" width="20" height="20" viewBox="0 0 20 20"><path stroke="#d6d6d6" fill="none" stroke-width="1.5" d="M2 2h15M2 5.5h15M2 9h15M2 2v14h9M5.5 2v7M9 2v7M12.5 2v7M16.5 2v7" stroke-width="1.3"/><rect x="11" y="10" width="8" height="9" fill="#d6d6d6"/><text x="15.0" y="17.7" font-family="Liberation Sans" font-weight="bold" font-size="7.5" fill="#262728" text-anchor="middle">C</text></svg>
<svg class="a" style="left:1059px;top:83.5px;" width="20" height="20" viewBox="0 0 20 20"><path stroke="#d6d6d6" fill="none" stroke-width="1.5" d="M2 2h15M2 5.5h15M2 9h15M2 2v14h9M5.5 2v7M9 2v7M12.5 2v7M16.5 2v7" stroke-width="1.3"/><rect x="11" y="10" width="8" height="9" fill="#d6d6d6"/><text x="15.0" y="17.7" font-family="Liberation Sans" font-weight="bold" font-size="7.5" fill="#262728" text-anchor="middle">L</text></svg>
<svg class="a" style="left:1110px;top:83.5px;" width="20" height="20" viewBox="0 0 20 20"><path stroke="#d6d6d6" stroke-width="1.5" stroke-dasharray="1.6 1.2" d="M3.0 1v17"/><path stroke="#d6d6d6" stroke-width="1.5" stroke-dasharray="1.6 1.2" d="M6.5 1v17"/><path stroke="#d6d6d6" stroke-width="1.5" stroke-dasharray="1.6 1.2" d="M10.0 1v17"/><path stroke="#d6d6d6" stroke-width="1.5" stroke-dasharray="1.6 1.2" d="M13.5 1v17"/></svg>
<svg class="a" style="left:1135px;top:83.5px;" width="20" height="20" viewBox="0 0 20 20"><path stroke="#d6d6d6" stroke-width="1.5" stroke-dasharray="1.6 1.2" d="M1.0 1v17"/><path stroke="#d6d6d6" stroke-width="1.5" stroke-dasharray="1.6 1.2" d="M4.5 1v17"/><path stroke="#d6d6d6" stroke-width="1.5" stroke-dasharray="1.6 1.2" d="M8.0 1v17"/><rect x="10" y="10" width="9" height="9" fill="#d6d6d6"/><path stroke="#262728" stroke-width="1.3" d="M11.5 11.5l6 6M17.5 11.5l-6 6"/><rect x="11" y="11" width="7" height="7" fill="none" stroke="#262728" stroke-width="0.8"/></svg>
<svg class="a" style="left:1158px;top:83.5px;" width="20" height="20" viewBox="0 0 20 20"><path stroke="#d6d6d6" fill="none" stroke-width="1.5" d="M1 11l7-8 7 8zM1 11c3 5 11 5 14 0M15 11h3"/><rect x="16" y="9" width="3" height="4" fill="#d6d6d6"/></svg>
<svg class="a" style="left:1183px;top:83.5px;" width="20" height="20" viewBox="0 0 20 20"><path stroke="#d6d6d6" fill="none" stroke-width="1.5" d="M1 10l6-7 6 7zM1 10c2 4 6 5 9 4"/><rect x="14.1" y="9.200000000000001" width="1.8" height="2.2" fill="#d6d6d6" transform="rotate(0 15 14)"/><rect x="14.1" y="9.200000000000001" width="1.8" height="2.2" fill="#d6d6d6" transform="rotate(45 15 14)"/><rect x="14.1" y="9.200000000000001" width="1.8" height="2.2" fill="#d6d6d6" transform="rotate(90 15 14)"/><rect x="14.1" y="9.200000000000001" width="1.8" height="2.2" fill="#d6d6d6" transform="rotate(135 15 14)"/><rect x="14.1" y="9.200000000000001" width="1.8" height="2.2" fill="#d6d6d6" transform="rotate(180 15 14)"/><rect x="14.1" y="9.200000000000001" width="1.8" height="2.2" fill="#d6d6d6" transform="rotate(225 15 14)"/><rect x="14.1" y="9.200000000000001" width="1.8" height="2.2" fill="#d6d6d6" transform="rotate(270 15 14)"/><rect x="14.1" y="9.200000000000001" width="1.8" height="2.2" fill="#d6d6d6" transform="rotate(315 15 14)"/><circle cx="15" cy="14" r="3.2" fill="#d6d6d6"/><circle cx="15" cy="14" r="1.2800000000000002" fill="#262728"/></svg>
<svg class="a" style="left:1208px;top:83.5px;" width="20" height="20" viewBox="0 0 20 20"><path stroke="#d6d6d6" fill="none" stroke-width="1.5" d="M2 1.5h15v3H2zM2 4.5v3M17 4.5v3"/><path stroke="#2fb8a6" stroke-width="2" d="M1 10h18"/><path stroke="#d6d6d6" stroke-width="1.5" stroke-dasharray="2 1.5" fill="none" d="M2 12v6h15v-6"/></svg>
<svg class="a" style="left:1233px;top:83.5px;" width="20" height="20" viewBox="0 0 20 20"><circle cx="12" cy="6" r="4.5" stroke="#d6d6d6" fill="none" stroke-width="1.5"/><path stroke="#d6d6d6" fill="none" stroke-width="1.5" d="M7.5 6H3v11M1 14l2 3 2-3"/><circle cx="12" cy="14" r="1.8" fill="#d6d6d6"/><rect x="8" y="17" width="8" height="1.6" fill="#d6d6d6"/></svg>
<svg class="a" style="left:1258px;top:83.5px;" width="20" height="20" viewBox="0 0 20 20"><circle cx="12" cy="6" r="4.5" stroke="#d6d6d6" fill="none" stroke-width="1.5"/><path stroke="#d6d6d6" fill="none" stroke-width="1.5" d="M7 7L2 17M5 9l5 7M1 14l1 3 3-1M8 14l2 2 1-3"/><circle cx="13" cy="14" r="1.8" fill="#d6d6d6"/><rect x="9" y="17" width="8" height="1.6" fill="#d6d6d6"/></svg>
<svg class="a" style="left:1283px;top:83.5px;" width="20" height="20" viewBox="0 0 20 20"><path stroke="#d6d6d6" fill="none" stroke-width="1.5" d="M12 1l3.5 3.5L12 8 8.5 4.5z M8 6H3v11M1 14l2 3 3-3"/><circle cx="12" cy="4.5" r="0.8" fill="#d6d6d6"/><circle cx="12" cy="14" r="1.8" fill="#d6d6d6"/><rect x="8" y="17" width="8" height="1.6" fill="#d6d6d6"/></svg>
<svg class="a" style="left:1308px;top:83.5px;" width="20" height="20" viewBox="0 0 20 20"><circle cx="12" cy="6" r="4.5" stroke="#d6d6d6" fill="none" stroke-width="1.5"/><path stroke="#d6d6d6" fill="none" stroke-width="1.5" d="M7.5 6H3v11M1 14l2 3 2-3"/><path fill="#d6d6d6" d="M10 13h2v2h-2zM10 16h2v2h-2zM13 14h6v1.5h-6zM13 17h6v1.5h-6z"/></svg>
<svg class="a" style="left:1334px;top:83.5px;" width="20" height="20" viewBox="0 0 20 20"><path stroke="#d6d6d6" fill="none" stroke-width="1.5" d="M1 7h17M4 4L1 7l3 3M15 4l3 3-3 3"/><path fill="#d6d6d6" d="M10 13h2v2h-2zM10 16h2v2h-2zM13 14h6v1.5h-6zM13 17h6v1.5h-6z"/></svg>
<svg class="a" style="left:1358px;top:83.5px;" width="20" height="20" viewBox="0 0 20 20"><path stroke="#d6d6d6" fill="none" stroke-width="1.5" d="M1.5 1.5h15v15h-15zM13 1.5v5"/><rect x="13.1" y="9.1" width="1.8" height="2.2" fill="#d6d6d6" transform="rotate(0 14 14)"/><rect x="13.1" y="9.1" width="1.8" height="2.2" fill="#d6d6d6" transform="rotate(45 14 14)"/><rect x="13.1" y="9.1" width="1.8" height="2.2" fill="#d6d6d6" transform="rotate(90 14 14)"/><rect x="13.1" y="9.1" width="1.8" height="2.2" fill="#d6d6d6" transform="rotate(135 14 14)"/><rect x="13.1" y="9.1" width="1.8" height="2.2" fill="#d6d6d6" transform="rotate(180 14 14)"/><rect x="13.1" y="9.1" width="1.8" height="2.2" fill="#d6d6d6" transform="rotate(225 14 14)"/><rect x="13.1" y="9.1" width="1.8" height="2.2" fill="#d6d6d6" transform="rotate(270 14 14)"/><rect x="13.1" y="9.1" width="1.8" height="2.2" fill="#d6d6d6" transform="rotate(315 14 14)"/><circle cx="14" cy="14" r="3.3" fill="#d6d6d6"/><circle cx="14" cy="14" r="1.32" fill="#262728"/></svg>
<svg class="a" style="left:1383px;top:83.5px;" width="20" height="20" viewBox="0 0 20 20"><path stroke="#d6d6d6" fill="none" stroke-width="1.5" d="M1.5 1.5h15v15h-15z"/><path stroke="#d6d6d6" stroke-width="1.2" fill="none" d="M4 7V4h3M10 4h3v2M4 11v3h3"/><rect x="13.1" y="9.1" width="1.8" height="2.2" fill="#d6d6d6" transform="rotate(0 14 14)"/><rect x="13.1" y="9.1" width="1.8" height="2.2" fill="#d6d6d6" transform="rotate(45 14 14)"/><rect x="13.1" y="9.1" width="1.8" height="2.2" fill="#d6d6d6" transform="rotate(90 14 14)"/><rect x="13.1" y="9.1" width="1.8" height="2.2" fill="#d6d6d6" transform="rotate(135 14 14)"/><rect x="13.1" y="9.1" width="1.8" height="2.2" fill="#d6d6d6" transform="rotate(180 14 14)"/><rect x="13.1" y="9.1" width="1.8" height="2.2" fill="#d6d6d6" transform="rotate(225 14 14)"/><rect x="13.1" y="9.1" width="1.8" height="2.2" fill="#d6d6d6" transform="rotate(270 14 14)"/><rect x="13.1" y="9.1" width="1.8" height="2.2" fill="#d6d6d6" transform="rotate(315 14 14)"/><circle cx="14" cy="14" r="3.3" fill="#d6d6d6"/><circle cx="14" cy="14" r="1.32" fill="#262728"/></svg>
<svg class="a" style="left:1408px;top:83.5px;" width="20" height="20" viewBox="0 0 20 20"><path stroke="#d6d6d6" fill="none" stroke-width="1.5" d="M1.5 1.5h9v3M1.5 1.5v9h3M5 5h13v13H5z"/><path stroke="#d6d6d6" fill="none" stroke-width="1.5" d="M6 6l7 7M13 9v4h-4M8 16H6v-2M16 8V6h-2" stroke-width="1.2"/></svg>
<svg class="a" style="left:1433px;top:83.5px;" width="20" height="20" viewBox="0 0 20 20"><path stroke="#d6d6d6" fill="none" stroke-width="1.5" d="M1.5 1.5h15v14h-15zM1.5 4.5h15"/><rect x="11" y="11" width="8" height="8" fill="#262728"/><path stroke="#d6d6d6" fill="none" stroke-width="1.5" d="M11 12h8M12 13v6h6v-6M14 14v4M16 14v4" stroke-width="1.2"/></svg>
<svg class="a" style="left:1458px;top:83.5px;" width="20" height="20" viewBox="0 0 20 20"><rect x="7.1" y="1.8000000000000003" width="1.8" height="2.2" fill="#d6d6d6" transform="rotate(0 8 8)"/><rect x="7.1" y="1.8000000000000003" width="1.8" height="2.2" fill="#d6d6d6" transform="rotate(45 8 8)"/><rect x="7.1" y="1.8000000000000003" width="1.8" height="2.2" fill="#d6d6d6" transform="rotate(90 8 8)"/><rect x="7.1" y="1.8000000000000003" width="1.8" height="2.2" fill="#d6d6d6" transform="rotate(135 8 8)"/><rect x="7.1" y="1.8000000000000003" width="1.8" height="2.2" fill="#d6d6d6" transform="rotate(180 8 8)"/><rect x="7.1" y="1.8000000000000003" width="1.8" height="2.2" fill="#d6d6d6" transform="rotate(225 8 8)"/><rect x="7.1" y="1.8000000000000003" width="1.8" height="2.2" fill="#d6d6d6" transform="rotate(270 8 8)"/><rect x="7.1" y="1.8000000000000003" width="1.8" height="2.2" fill="#d6d6d6" transform="rotate(315 8 8)"/><circle cx="8" cy="8" r="4.6" fill="#d6d6d6"/><circle cx="8" cy="8" r="1.8399999999999999" fill="#262728"/><rect x="14.1" y="10.200000000000001" width="1.8" height="2.2" fill="#d6d6d6" transform="rotate(0 15 15)"/><rect x="14.1" y="10.200000000000001" width="1.8" height="2.2" fill="#d6d6d6" transform="rotate(45 15 15)"/><rect x="14.1" y="10.200000000000001" width="1.8" height="2.2" fill="#d6d6d6" transform="rotate(90 15 15)"/><rect x="14.1" y="10.200000000000001" width="1.8" height="2.2" fill="#d6d6d6" transform="rotate(135 15 15)"/><rect x="14.1" y="10.200000000000001" width="1.8" height="2.2" fill="#d6d6d6" transform="rotate(180 15 15)"/><rect x="14.1" y="10.200000000000001" width="1.8" height="2.2" fill="#d6d6d6" transform="rotate(225 15 15)"/><rect x="14.1" y="10.200000000000001" width="1.8" height="2.2" fill="#d6d6d6" transform="rotate(270 15 15)"/><rect x="14.1" y="10.200000000000001" width="1.8" height="2.2" fill="#d6d6d6" transform="rotate(315 15 15)"/><circle cx="15" cy="15" r="3.2" fill="#d6d6d6"/><circle cx="15" cy="15" r="1.2800000000000002" fill="#262728"/></svg>
<svg class="a" style="left:1483px;top:83.5px;" width="20" height="20" viewBox="0 0 20 20"><path stroke="#d6d6d6" fill="none" stroke-width="1.5" d="M1.5 1.5h15v15h-15zM1.5 4.5h15"/><rect x="10" y="12" width="9" height="7" fill="#d6d6d6"/><path stroke="#d6d6d6" fill="none" stroke-width="1.5" d="M12 12V9.5a2.5 2.5 0 0 1 5 0V12"/></svg>
<svg class="a" style="left:1508px;top:83.5px;" width="20" height="20" viewBox="0 0 20 20"><path stroke="#d6d6d6" fill="none" stroke-width="1.5" d="M1.5 1.5h15v15h-15zM1.5 4.5h15"/><rect x="11" y="13" width="8" height="6" fill="#d6d6d6"/><path stroke="#d6d6d6" fill="none" stroke-width="1.5" d="M9 13v-2a2.5 2.5 0 0 1 5 0"/></svg>
<svg class="a" style="left:1533px;top:83.5px;" width="20" height="20" viewBox="0 0 20 20"><text x="1" y="7" font-family="Liberation Sans" font-weight="bold" font-size="6.5" fill="#d6d6d6">3D</text><text x="0" y="13" font-family="Liberation Sans" font-weight="bold" font-size="6" fill="#d84040">PDF</text><path stroke="#d6d6d6" fill="none" stroke-width="1.5" stroke-width="1.2" d="M10 1h3l2 2v3M2 15v3h8"/><rect x="14.6" y="11.4" width="1.8" height="2.2" fill="#d6d6d6" transform="rotate(0 15.5 15.5)"/><rect x="14.6" y="11.4" width="1.8" height="2.2" fill="#d6d6d6" transform="rotate(45 15.5 15.5)"/><rect x="14.6" y="11.4" width="1.8" height="2.2" fill="#d6d6d6" transform="rotate(90 15.5 15.5)"/><rect x="14.6" y="11.4" width="1.8" height="2.2" fill="#d6d6d6" transform="rotate(135 15.5 15.5)"/><rect x="14.6" y="11.4" width="1.8" height="2.2" fill="#d6d6d6" transform="rotate(180 15.5 15.5)"/><rect x="14.6" y="11.4" width="1.8" height="2.2" fill="#d6d6d6" transform="rotate(225 15.5 15.5)"/><rect x="14.6" y="11.4" width="1.8" height="2.2" fill="#d6d6d6" transform="rotate(270 15.5 15.5)"/><rect x="14.6" y="11.4" width="1.8" height="2.2" fill="#d6d6d6" transform="rotate(315 15.5 15.5)"/><circle cx="15.5" cy="15.5" r="2.5" fill="#d6d6d6"/><circle cx="15.5" cy="15.5" r="1.0" fill="#262728"/></svg>
<svg class="a" style="left:1558px;top:83.5px;" width="20" height="20" viewBox="0 0 20 20"><path stroke="#d6d6d6" fill="none" stroke-width="1.5" d="M1 3c4-2 13-2 17 0M1 3c1 5 16 5 17 0"/><path stroke="#d6d6d6" stroke-width="1.3" stroke-dasharray="1.5 1.5" d="M4 9v4M8 10v4M12 10v4"/><circle cx="14" cy="14" r="1.8" fill="#d6d6d6"/><rect x="10" y="17" width="8" height="1.6" fill="#d6d6d6"/></svg>
<svg class="a" style="left:1584px;top:83.5px;" width="20" height="20" viewBox="0 0 20 20"><path stroke="#d6d6d6" fill="none" stroke-width="1.5" d="M3 2.5h13v16H3zM5 2.5V1M14 2.5V1"/><rect x="5.5" y="5" width="8" height="6" fill="none" stroke="#2fb8a6" stroke-width="1.4"/><text x="9.5" y="10.3" font-family="Liberation Sans" font-size="5.5" fill="#2fb8a6" text-anchor="middle">3D</text><path stroke="#d6d6d6" stroke-width="1" d="M5.5 13h8M5.5 15h8"/></svg>
<svg class="a" style="left:1608px;top:83.5px;" width="20" height="20" viewBox="0 0 20 20"><path fill="#2fb8a6" d="M3 9l3-6h7l3 6z"/><path stroke="#d6d6d6" fill="none" stroke-width="1.5" d="M2 9h15M3 11h13v7H3zM5 14h3M10 13v4"/></svg>
<svg class="a" style="left:1633px;top:83.5px;" width="20" height="20" viewBox="0 0 20 20"><path stroke="#d6d6d6" fill="none" stroke-width="1.5" stroke-width="1.3" d="M2 2h16M2 5.5h16M2 9h8M2 2v14h6M5.5 2v9M9 2v7M12.5 2v3.5M16.5 2v3.5"/><path fill="#2fb8a6" d="M10 13l2-4h5l2 4z"/><path stroke="#d6d6d6" fill="none" stroke-width="1.5" d="M10 14h9v4h-9z"/></svg>
<svg class="a" style="left:1658px;top:83.5px;" width="20" height="20" viewBox="0 0 20 20"><path fill="#2fb8a6" d="M1 10l3-5h7l2 5z"/><rect x="12" y="1" width="7" height="7" fill="#d6d6d6"/><path stroke="#262728" stroke-width="1.3" d="M14.5 2.5v4h3"/><path stroke="#d6d6d6" fill="none" stroke-width="1.5" d="M2 11h13v7H2zM4 14h3M9 13v4"/></svg>
<svg class="a" style="left:364px;top:96px;" width="7" height="9" viewBox="0 0 7 9"><path fill="#c8c8c8" d="M0 0h7v1.2H0zM0 3.5h7l-3.5 4z"/></svg>
<svg class="a" style="left:378.5px;top:84px;" width="4" height="19" viewBox="0 0 4 19"><rect x="0" y="0" width="1" height="1" fill="#555"/><rect x="2" y="0" width="1" height="1" fill="#555"/><rect x="0" y="2" width="1" height="1" fill="#555"/><rect x="2" y="2" width="1" height="1" fill="#555"/><rect x="0" y="4" width="1" height="1" fill="#555"/><rect x="2" y="4" width="1" height="1" fill="#555"/><rect x="0" y="6" width="1" height="1" fill="#555"/><rect x="2" y="6" width="1" height="1" fill="#555"/><rect x="0" y="8" width="1" height="1" fill="#555"/><rect x="2" y="8" width="1" height="1" fill="#555"/><rect x="0" y="10" width="1" height="1" fill="#555"/><rect x="2" y="10" width="1" height="1" fill="#555"/><rect x="0" y="12" width="1" height="1" fill="#555"/><rect x="2" y="12" width="1" height="1" fill="#555"/><rect x="0" y="14" width="1" height="1" fill="#555"/><rect x="2" y="14" width="1" height="1" fill="#555"/><rect x="0" y="16" width="1" height="1" fill="#555"/><rect x="2" y="16" width="1" height="1" fill="#555"/><rect x="0" y="18" width="1" height="1" fill="#555"/><rect x="2" y="18" width="1" height="1" fill="#555"/></svg>
<svg class="a" style="left:688px;top:96px;" width="7" height="9" viewBox="0 0 7 9"><path fill="#c8c8c8" d="M0 0h7v1.2H0zM0 3.5h7l-3.5 4z"/></svg>
<svg class="a" style="left:700.5px;top:84px;" width="4" height="19" viewBox="0 0 4 19"><rect x="0" y="0" width="1" height="1" fill="#555"/><rect x="2" y="0" width="1" height="1" fill="#555"/><rect x="0" y="2" width="1" height="1" fill="#555"/><rect x="2" y="2" width="1" height="1" fill="#555"/><rect x="0" y="4" width="1" height="1" fill="#555"/><rect x="2" y="4" width="1" height="1" fill="#555"/><rect x="0" y="6" width="1" height="1" fill="#555"/><rect x="2" y="6" width="1" height="1" fill="#555"/><rect x="0" y="8" width="1" height="1" fill="#555"/><rect x="2" y="8" width="1" height="1" fill="#555"/><rect x="0" y="10" width="1" height="1" fill="#555"/><rect x="2" y="10" width="1" height="1" fill="#555"/><rect x="0" y="12" width="1" height="1" fill="#555"/><rect x="2" y="12" width="1" height="1" fill="#555"/><rect x="0" y="14" width="1" height="1" fill="#555"/><rect x="2" y="14" width="1" height="1" fill="#555"/><rect x="0" y="16" width="1" height="1" fill="#555"/><rect x="2" y="16" width="1" height="1" fill="#555"/><rect x="0" y="18" width="1" height="1" fill="#555"/><rect x="2" y="18" width="1" height="1" fill="#555"/></svg>
<svg class="a" style="left:938px;top:96px;" width="7" height="9" viewBox="0 0 7 9"><path fill="#c8c8c8" d="M0 0h7v1.2H0zM0 3.5h7l-3.5 4z"/></svg>
<svg class="a" style="left:950.5px;top:84px;" width="4" height="19" viewBox="0 0 4 19"><rect x="0" y="0" width="1" height="1" fill="#555"/><rect x="2" y="0" width="1" height="1" fill="#555"/><rect x="0" y="2" width="1" height="1" fill="#555"/><rect x="2" y="2" width="1" height="1" fill="#555"/><rect x="0" y="4" width="1" height="1" fill="#555"/><rect x="2" y="4" width="1" height="1" fill="#555"/><rect x="0" y="6" width="1" height="1" fill="#555"/><rect x="2" y="6" width="1" height="1" fill="#555"/><rect x="0" y="8" width="1" height="1" fill="#555"/><rect x="2" y="8" width="1" height="1" fill="#555"/><rect x="0" y="10" width="1" height="1" fill="#555"/><rect x="2" y="10" width="1" height="1" fill="#555"/><rect x="0" y="12" width="1" height="1" fill="#555"/><rect x="2" y="12" width="1" height="1" fill="#555"/><rect x="0" y="14" width="1" height="1" fill="#555"/><rect x="2" y="14" width="1" height="1" fill="#555"/><rect x="0" y="16" width="1" height="1" fill="#555"/><rect x="2" y="16" width="1" height="1" fill="#555"/><rect x="0" y="18" width="1" height="1" fill="#555"/><rect x="2" y="18" width="1" height="1" fill="#555"/></svg>
<svg class="a" style="left:1087px;top:96px;" width="7" height="9" viewBox="0 0 7 9"><path fill="#c8c8c8" d="M0 0h7v1.2H0zM0 3.5h7l-3.5 4z"/></svg>
<svg class="a" style="left:1100.5px;top:84px;" width="4" height="19" viewBox="0 0 4 19"><rect x="0" y="0" width="1" height="1" fill="#555"/><rect x="2" y="0" width="1" height="1" fill="#555"/><rect x="0" y="2" width="1" height="1" fill="#555"/><rect x="2" y="2" width="1" height="1" fill="#555"/><rect x="0" y="4" width="1" height="1" fill="#555"/><rect x="2" y="4" width="1" height="1" fill="#555"/><rect x="0" y="6" width="1" height="1" fill="#555"/><rect x="2" y="6" width="1" height="1" fill="#555"/><rect x="0" y="8" width="1" height="1" fill="#555"/><rect x="2" y="8" width="1" height="1" fill="#555"/><rect x="0" y="10" width="1" height="1" fill="#555"/><rect x="2" y="10" width="1" height="1" fill="#555"/><rect x="0" y="12" width="1" height="1" fill="#555"/><rect x="2" y="12" width="1" height="1" fill="#555"/><rect x="0" y="14" width="1" height="1" fill="#555"/><rect x="2" y="14" width="1" height="1" fill="#555"/><rect x="0" y="16" width="1" height="1" fill="#555"/><rect x="2" y="16" width="1" height="1" fill="#555"/><rect x="0" y="18" width="1" height="1" fill="#555"/><rect x="2" y="18" width="1" height="1" fill="#555"/></svg>
<svg class="a" style="left:1685px;top:96px;" width="7" height="9" viewBox="0 0 7 9"><path fill="#c8c8c8" d="M0 0h7v1.2H0zM0 3.5h7l-3.5 4z"/></svg>
<svg class="a" style="left:3.5px;top:113px;" width="4" height="19" viewBox="0 0 4 19"><rect x="0" y="0" width="1" height="1" fill="#555"/><rect x="2" y="0" width="1" height="1" fill="#555"/><rect x="0" y="2" width="1" height="1" fill="#555"/><rect x="2" y="2" width="1" height="1" fill="#555"/><rect x="0" y="4" width="1" height="1" fill="#555"/><rect x="2" y="4" width="1" height="1" fill="#555"/><rect x="0" y="6" width="1" height="1" fill="#555"/><rect x="2" y="6" width="1" height="1" fill="#555"/><rect x="0" y="8" width="1" height="1" fill="#555"/><rect x="2" y="8" width="1" height="1" fill="#555"/><rect x="0" y="10" width="1" height="1" fill="#555"/><rect x="2" y="10" width="1" height="1" fill="#555"/><rect x="0" y="12" width="1" height="1" fill="#555"/><rect x="2" y="12" width="1" height="1" fill="#555"/><rect x="0" y="14" width="1" height="1" fill="#555"/><rect x="2" y="14" width="1" height="1" fill="#555"/><rect x="0" y="16" width="1" height="1" fill="#555"/><rect x="2" y="16" width="1" height="1" fill="#555"/><rect x="0" y="18" width="1" height="1" fill="#555"/><rect x="2" y="18" width="1" height="1" fill="#555"/></svg>
<svg class="a" style="left:13px;top:113px;" width="20" height="20" viewBox="0 0 20 20"><path stroke="#d6d6d6" fill="none" stroke-width="1.6" d="M1 6h16M1 16h16"/><path stroke="#2fb8a6" fill="none" stroke-width="1.6" stroke-width="2" d="M0 11h19"/></svg>
<svg class="a" style="left:39px;top:113px;" width="20" height="20" viewBox="0 0 20 20"><rect x="1" y="1" width="14" height="18" stroke="#2fb8a6" fill="none" stroke-width="1.6"/><path fill="#aaa" d="M4 5h8v2H9v6h3v2H4v-2h3V7H4z"/></svg>
<svg class="a" style="left:65px;top:113px;" width="20" height="20" viewBox="0 0 20 20"><path stroke="#2fb8a6" fill="none" stroke-width="1.6" d="M2 18v-9a3 3 0 0 1 3-3h6"/><rect x="0" y="9" width="4" height="4" fill="#eee"/><rect x="0" y="16" width="4" height="4" fill="#eee"/><rect x="11" y="1" width="8" height="7" fill="#ddd"/></svg>
<svg class="a" style="left:90px;top:113px;" width="20" height="20" viewBox="0 0 20 20"><rect x="1" y="1" width="8" height="18" fill="#2fb8a6"/><path fill="#ccc" d="M10 8l8 7-4 0 2 4-2 1-2-4-2 3z"/></svg>
<svg class="a" style="left:113px;top:113px;" width="20" height="20" viewBox="0 0 20 20"><path fill="#2fb8a6" d="M1 17l5-3h13l-5 3z M1 13l5-3h13l-5 3z"/><path fill="#c8c8c8" d="M1 9l5-4h13l-5 4z"/></svg>
<svg class="a" style="left:138px;top:113px;" width="20" height="20" viewBox="0 0 20 20"><path stroke="#ccc" stroke-width="1.6" d="M1 10h12"/><path stroke="#2fb8a6" fill="none" stroke-width="1.6" d="M13 10h6"/></svg>
<svg class="a" style="left:163px;top:113px;" width="20" height="20" viewBox="0 0 20 20"><path stroke="#d6d6d6" fill="none" stroke-width="1.6" stroke-width="1.3" d="M1 6h18M1 14h18"/><path stroke="#2fb8a6" fill="none" stroke-width="1.6" stroke-width="1.3" d="M1 10h18"/></svg>
<svg class="a" style="left:188px;top:113px;" width="20" height="20" viewBox="0 0 20 20"><path stroke="#2fb8a6" fill="none" stroke-width="1.6" stroke-width="1.8" d="M6 4A8 8 0 1 1 3 14M4 2h4v4"/><rect x="0" y="15" width="5" height="5" fill="#2fb8a6"/></svg>
<svg class="a" style="left:213px;top:113px;" width="20" height="20" viewBox="0 0 20 20"><path stroke="#aaa" fill="none" stroke-width="1.4" d="M6 1h13v13H9"/><path stroke="#2fb8a6" fill="none" stroke-width="1.6" d="M9 10l8-8M13 2h4v4"/><rect x="5" y="10" width="6" height="6" fill="#ddd"/><rect x="1" y="15" width="5" height="5" fill="#2fb8a6"/></svg>
<svg class="a" style="left:238px;top:113px;" width="20" height="20" viewBox="0 0 20 20"><path stroke="#2fb8a6" fill="none" stroke-width="1.6" stroke-width="2" d="M1 6h18M4 3L1 6l3 3M16 3l3 3-3 3"/><path stroke="#d6d6d6" fill="none" stroke-width="1.6" stroke-width="1.2" d="M2 14h16M5 11v6M10 11v6M15 11v6"/></svg>
<svg class="a" style="left:262px;top:113px;" width="20" height="20" viewBox="0 0 20 20"><path stroke="#2fb8a6" fill="none" stroke-width="1.6" stroke-width="2" d="M2 18L16 4M10 3h7v7"/><path stroke="#d6d6d6" fill="none" stroke-width="1.6" stroke-width="1.2" d="M8 18l10-10M9 11l4 4M12 8l4 4"/></svg>
<div class="a" style="left:1px;top:137px;width:260px;height:984px;background:#252626;"></div>
<div class="a" style="left:261px;top:137px;width:2px;height:984px;background:#141414;"></div>
<div class="a" style="left:1px;top:137px;width:260px;height:48px;background:#1c1c1d;"></div>
<div class="t" style="left:13.80px;top:140.24px;font-size:13.48px;color:#cfcfcf;transform:scaleX(1.0122);">CIM View</div>
<svg class="a" style="left:226px;top:143px;" width="26" height="11" viewBox="0 0 26 11"><path fill="#f0f0f0" d="M1.5 0h6v1.2H6.8v4.3H8.3v1.6H5.3V11H4.2V7.1H0.7V5.5h1.5V1.2H1.5z"/><path fill="#262727" d="M3.4 1.2h1.2v4.3H3.4z"/><path stroke="#e8e8e8" stroke-width="1.3" d="M17 1.5l8 8M25 1.5l-8 8"/></svg>
<div class="t" style="left:4.00px;top:165.91px;font-size:12.46px;color:#d8d8d8;transform:scaleX(1.1066);">All</div>
<svg class="a" style="left:245px;top:171px;" width="10" height="7" viewBox="0 0 10 7"><path fill="#f0f0f0" d="M0 0h10L5 6z"/></svg>
<div class="a" style="left:1px;top:185px;width:260px;height:20px;background:#303131;"></div>
<div class="a" style="left:247px;top:185px;width:1px;height:20px;background:#2a2a2a;"></div>
<div class="a" style="left:197px;top:185px;width:1px;height:20px;background:#2a2a2a;"></div>
<div class="t" style="left:4.50px;top:189.30px;font-size:13.77px;color:#e8e8e8;transform:scaleX(1.0404);">Item</div>
<div class="t" style="left:203.00px;top:189.30px;font-size:13.77px;color:#d8d8d8;transform:scaleX(0.9684);">Status</div>
<div class="t" style="left:35.00px;top:208.30px;font-size:13.77px;color:#d84c2c;transform:scaleX(0.9413);">CIM mode</div>
<svg class="a" style="left:6px;top:230px;" width="7" height="10" viewBox="0 0 7 10"><path fill="#cfcfcf" d="M0 0l6 4.5L0 9z"/></svg>
<svg class="a" style="left:25px;top:227px;" width="18" height="17" viewBox="0 0 18 17"><path stroke="#cfcfcf" fill="none" stroke-width="1.2" d="M1 2h13v10H1zM1 5h13M1 8h13M4 2v10M7 2v10M10 2v10"/><rect x="11" y="10" width="6" height="6" fill="#cfcfcf"/></svg>
<div class="t" style="left:47.00px;top:226.91px;font-size:13.04px;color:#dcdcdc;transform:scaleX(0.9665);">Auto Generated Drawing</div>
<div class="a" style="left:1px;top:629px;width:260px;height:2px;background:#111111;"></div>
<div class="a" style="left:1px;top:631px;width:260px;height:22px;background:#1b1b1c;"></div>
<div class="t" style="left:13.50px;top:633.43px;font-size:14.20px;color:#cfcfcf;transform:scaleX(0.9454);">Object</div>
<svg class="a" style="left:226px;top:636px;" width="26" height="11" viewBox="0 0 26 11"><path fill="#f0f0f0" d="M1.5 0h6v1.2H6.8v4.3H8.3v1.6H5.3V11H4.2V7.1H0.7V5.5h1.5V1.2H1.5z"/><path fill="#262727" d="M3.4 1.2h1.2v4.3H3.4z"/><path stroke="#e8e8e8" stroke-width="1.3" d="M17 1.5l8 8M25 1.5l-8 8"/></svg>
<div class="a" style="left:1px;top:653px;width:260px;height:20px;background:#303131;"></div>
<div class="a" style="left:256px;top:653px;width:1px;height:20px;background:#2a2a2a;"></div>
<div class="t" style="left:5.50px;top:657.84px;font-size:13.48px;color:#e8e8e8;transform:scaleX(1.0825);">Item</div>
<svg class="a" style="left:13px;top:676px;" width="16" height="17" viewBox="0 0 16 17"><rect x="0.5" y="0.5" width="8" height="15" fill="none" stroke="#bbb" stroke-dasharray="1.5 1"/><rect x="3" y="3" width="4" height="4" fill="#ccc"/><rect x="3" y="9" width="4" height="4" fill="#aaa"/><rect x="12" y="4" width="2" height="2" fill="#ddd"/><rect x="12" y="10" width="2" height="2" fill="#ddd"/></svg>
<div class="t" style="left:34.00px;top:676.13px;font-size:14.20px;color:#d8d8d8;transform:scaleX(0.9205);">Grouping</div>
<div class="a" style="left:263px;top:137px;width:1420px;height:26px;background:#1e1e1e;"></div>
<div class="a" style="left:263.6px;top:139.5px;width:36px;height:22.5px;background:#2d2d2d;"></div>
<div class="t" style="left:270.00px;top:144.61px;font-size:12.46px;color:#b8b8b8;transform:scaleX(0.8460);">Base</div>
<div class="a" style="left:301px;top:139.5px;width:81.5px;height:22.5px;background:#2d2d2d;"></div>
<div class="t" style="left:307.50px;top:144.61px;font-size:12.46px;color:#b8b8b8;transform:scaleX(0.8401);">MC-PI...PLB_1</div>
<div class="a" style="left:384.5px;top:139.5px;width:85px;height:22.5px;background:#2d2d2d;"></div>
<div class="t" style="left:390.50px;top:144.61px;font-size:12.46px;color:#b8b8b8;transform:scaleX(0.8727);">Dimen...PLB_2</div>
<div class="a" style="left:471.5px;top:139.5px;width:2.5px;height:22.5px;background:#2cb8b0;"></div>
<div class="a" style="left:474px;top:139.5px;width:106.5px;height:22.5px;background:#353535;"></div>
<div class="t" style="left:479.50px;top:144.61px;font-size:12.46px;color:#e0e0e0;transform:scaleX(0.9081);">MC-PI...PLB_4</div>
<svg class="a" style="left:564px;top:147.5px;" width="12" height="9" viewBox="0 0 12 9"><path stroke="#d8d8d8" stroke-width="1.4" d="M1.5 1l8.5 7M10 1L1.5 8"/></svg>
<div class="a" style="left:581.5px;top:139.5px;width:16.5px;height:22.5px;background:#2d2d2d;"></div>
<svg class="a" style="left:585px;top:145px;" width="12" height="12" viewBox="0 0 12 12"><path stroke="#d8d8d8" stroke-width="1.8" d="M6 0v12M0 6h12"/></svg>
<svg class="a" style="left:1666px;top:147px;" width="12" height="7" viewBox="0 0 12 7"><path fill="#f4f4f4" d="M0 0h12L6 6z"/></svg>
<div class="a" style="left:1683px;top:137px;width:2px;height:984px;background:#141414;"></div>
<div class="a" style="left:264px;top:163px;width:1418px;height:826px;background:#000;border:3px solid #22b4c4;"></div>
<div class="a" style="left:268px;top:167px;width:334px;height:25px;background:#333333;"></div>
<div class="t" style="left:280.70px;top:171.50px;font-size:13.77px;color:#e2e2e2;transform:scaleX(0.9021);">CIM Mode &gt; Point Library &gt; MC-PIER (Type-16)_PLB_4</div>
<svg class="a" style="left:285px;top:820px;" width="150" height="150" viewBox="0 0 150 150"><g stroke="#e8e8e8" stroke-width="1.3" fill="none"><path d="M8.5 8.5l6.5 8 6.5-8M15 16.5v8"/><path d="M15 39.5l-8 24h16z"/><path d="M15 63.5v70"/><rect x="7" y="125.5" width="16" height="16"/><path d="M15 133.5h70"/><path d="M85 125.5v16l24-8z"/><path d="M126 126l12 15M138 126l-12 15"/></g></svg>
<svg class="a" style="left:655px;top:900px;" width="30" height="90" viewBox="0 0 30 90"><g stroke="#e0e0e0" stroke-width="1.3" fill="none"><path d="M14.5 3v84"/><rect x="4" y="78" width="21" height="12"/></g></svg>
<div class="a" style="left:584px;top:986px;width:171px;height:2px;background:#9fe0e8;"></div>
<div class="a" style="left:1433.5px;top:960px;width:212.5px;height:25px;background:#2b2b2b;border:1px solid #3c3c3c;border-radius:4px;"></div>
<div class="t" style="left:1444.00px;top:967.01px;font-size:14.93px;color:#d4d4d4;transform:scaleX(0.8922);">80092.2943,-48811.1699,0.0000</div>
<div class="a" style="left:1650px;top:957px;width:33px;height:32px;background:#202020;"></div>
<svg class="a" style="left:1656px;top:963px;" width="21" height="19" viewBox="0 0 21 19"><rect x="1" y="1" width="7" height="7" rx="1" fill="#ececec"/><rect x="11" y="1" width="8" height="7" rx="1" fill="#ececec"/><rect x="1" y="11" width="7" height="7" rx="1" fill="#ececec"/><rect x="11" y="11" width="8" height="7" rx="1" fill="#ececec"/></svg>
<div class="a" style="left:263px;top:989px;width:1420px;height:23px;background:#1f2022;"></div>
<div class="a" style="left:263px;top:1010px;width:1420px;height:1.5px;background:#333436;"></div>
<div class="a" style="left:266.2px;top:991.6px;width:16px;height:15.6px;background:#2e2f30;"></div>
<div class="a" style="left:284.8px;top:991.6px;width:16px;height:15.6px;background:#2e2f30;"></div>
<div class="a" style="left:303.8px;top:991.6px;width:16px;height:15.6px;background:#2e2f30;"></div>
<div class="a" style="left:322.6px;top:991.6px;width:16px;height:15.6px;background:#2e2f30;"></div>
<svg class="a" style="left:266px;top:992px;" width="75" height="15" viewBox="0 0 75 15"><g fill="#d0d0d0"><rect x="3.5" y="3" width="1.5" height="9"/><path d="M12 3l-6 4.5 6 4.5z"/><path d="M31 3l-6 4.5 6 4.5z"/><path d="M44 3l6 4.5-6 4.5z"/><path d="M63 3l6 4.5-6 4.5z"/><rect x="70" y="3" width="1.5" height="9"/></g></svg>
<svg class="a" style="left:340px;top:991px;" width="140" height="17" viewBox="0 0 140 17"><path d="M0.6 0h65l-14.5 17H0.6z" fill="#3a3a3a"/><path d="M66 0h80l-14.5 17H51z" fill="#2a2b2c"/></svg>
<div class="t" style="left:348.40px;top:992.10px;font-size:11.88px;color:#d4d4d4;font-weight:bold;transform:scaleX(1.1453);">Model</div>
<div class="t" style="left:408.50px;top:992.10px;font-size:11.88px;color:#888888;transform:scaleX(1.0679);">Layout1</div>
<div class="a" style="left:473px;top:995.2px;width:1.6px;height:8.4px;background:#d0d0d0;"></div>
<div class="a" style="left:475px;top:991px;width:17px;height:17px;background:#2e2f30;"></div>
<div class="a" style="left:263px;top:1012px;width:24px;height:109px;background:#2b2c2f;"></div>
<div class="a" style="left:287px;top:1012px;width:1396px;height:109px;background:#17181a;"></div>
<div class="a" style="left:287px;top:1096px;width:1396px;height:1px;background:#2b2c2e;"></div>
<svg class="a" style="left:268px;top:1014px;" width="15" height="4" viewBox="0 0 15 4"><path stroke="#aaa" stroke-width="1" stroke-dasharray="1 1" d="M0 1h15M0 3h15"/></svg>
<svg class="a" style="left:269px;top:1028px;" width="13" height="13" viewBox="0 0 13 13"><g fill="#f0f0f0"><rect x="0" y="1" width="13" height="2"/><rect x="0" y="5.5" width="13" height="2"/><rect x="0" y="10" width="13" height="2"/></g></svg>
<div class="a" style="left:287px;top:1012px;width:1396px;height:4px;overflow:hidden"><div class="t" style="left:3px;top:-9.5px;font-size:13px;color:#bcbcbc;transform:scaleX(0.97)">SH 7 ...USER WINDOW NAME TO PIER (TYPE-16)/PLB_4 -&gt; MC-PIER (TYPE-16)/PLB_4</div></div>
<div class="t" style="left:293.00px;top:1017.80px;font-size:13.77px;color:#d0d0d0;transform:scaleX(0.9776);">* Change Mode: current mode (Drawing Mode)</div>
<div class="t" style="left:289.00px;top:1033.30px;font-size:13.77px;color:#d0d0d0;transform:scaleX(0.9773);">Command:</div>
<div class="t" style="left:289.00px;top:1048.80px;font-size:13.77px;color:#d0d0d0;transform:scaleX(0.9773);">Command:</div>
<div class="t" style="left:290.00px;top:1064.30px;font-size:13.77px;color:#d8d8d8;transform:scaleX(0.9740);">The project is being saved by the auto-save feature....</div>
<div class="t" style="left:289.00px;top:1079.80px;font-size:13.77px;color:#d8d8d8;transform:scaleX(0.9545);">ss *SHEETSETTING*</div>
<div class="a" style="left:295.8px;top:1101px;width:16.5px;height:17px;background:#d8d8d8;border-radius:2px;"></div>
<svg class="a" style="left:298px;top:1104px;" width="12" height="11" viewBox="0 0 12 11"><path stroke="#333" stroke-width="1.4" fill="none" d="M1 1l4 4-4 4"/><rect x="5" y="8" width="5" height="1.6" fill="#333"/></svg>
<div class="a" style="left:1px;top:1121px;width:1998px;height:2px;background:#222222;"></div>
<div class="a" style="left:1685px;top:137px;width:314px;height:984px;background:#272828;"></div>
<div class="a" style="left:1685px;top:137px;width:314px;height:24px;background:#1c1c1d;"></div>
<div class="t" style="left:1698.50px;top:139.40px;font-size:14.35px;color:#cfcfcf;transform:scaleX(0.9244);">CAD View</div>
<svg class="a" style="left:1963px;top:143px;" width="26" height="11" viewBox="0 0 26 11"><path fill="#f0f0f0" d="M1.5 0h6v1.2H6.8v4.3H8.3v1.6H5.3V11H4.2V7.1H0.7V5.5h1.5V1.2H1.5z"/><path fill="#262727" d="M3.4 1.2h1.2v4.3H3.4z"/><path stroke="#e8e8e8" stroke-width="1.3" d="M17 1.5l8 8M25 1.5l-8 8"/></svg>
<div class="a" style="left:1685px;top:161px;width:314px;height:19px;background:#303131;"></div>
<div class="a" style="left:1991px;top:161px;width:1px;height:19px;background:#2a2a2a;"></div>
<div class="t" style="left:1690.00px;top:164.81px;font-size:13.04px;color:#e8e8e8;transform:scaleX(1.1145);">Item</div>
<div class="a" style="left:1685px;top:218.7px;width:314px;height:56px;background:#222323;"></div>
<svg class="a" style="left:1697px;top:184px;" width="15" height="12" viewBox="0 0 15 12"><path stroke="#cfcfcf" fill="none" stroke-width="1.1" d="M2 1h12v10H2zM2 1L1 2v9l1 0M5 1v10M8 1v10M11 1v10M2 4h12M2 7h12"/></svg>
<div class="t" style="left:1719.20px;top:182.70px;font-size:13.77px;color:#d84c2c;transform:scaleX(0.9477);">CIM mode</div>
<svg class="a" style="left:1690px;top:205px;" width="9" height="9" viewBox="0 0 9 9"><path fill="none" stroke="#2aa898" stroke-width="1.3" d="M1 8h7V1z"/></svg>
<svg class="a" style="left:1709px;top:202px;" width="18" height="17" viewBox="0 0 18 17"><path stroke="#cfcfcf" fill="none" stroke-width="1.1" d="M1 1h12v10H1zM4 1v10M7 1v10M10 1v10M1 4h12M1 7h12"/><rect x="9" y="10" width="8" height="6" fill="#cfcfcf"/></svg>
<div class="t" style="left:1731.00px;top:201.50px;font-size:14.35px;color:#d8d8d8;transform:scaleX(0.8834);">CAD</div>
<svg class="a" style="left:1786px;top:200px;" width="42" height="19" viewBox="0 0 42 19"><rect x="1" y="1" width="17" height="17" rx="3" fill="none" stroke="#8a8a8a" stroke-width="1.2"/><rect x="4" y="4" width="11" height="11" fill="none" stroke="#dcdcdc" stroke-width="1.4"/><path stroke="#dcdcdc" d="M11 4v11"/><rect x="22" y="1" width="18" height="17" rx="3" fill="none" stroke="#8a8a8a" stroke-width="1.2"/><rect x="25" y="4" width="12" height="11" fill="none" stroke="#2d8ce0" stroke-width="1.6"/><path stroke="#2d8ce0" stroke-width="2" d="M25 7h12"/></svg>
<svg class="a" style="left:1723px;top:222px;" width="15" height="13" viewBox="0 0 15 13"><path stroke="#d4d4d4" fill="none" stroke-width="1.2" d="M1 3h13v9H1zM3 3V1h2v2M9 3V1h2v2"/></svg>
<div class="t" style="left:1744.00px;top:220.74px;font-size:13.48px;color:#d8d8d8;transform:scaleX(0.9385);">cDrawing1</div>
<svg class="a" style="left:1703px;top:243px;" width="6" height="9" viewBox="0 0 6 9"><path fill="#cfcfcf" d="M0 0l5.5 4.5L0 9z"/></svg>
<svg class="a" style="left:1723px;top:241px;" width="15" height="13" viewBox="0 0 15 13"><path stroke="#d4d4d4" fill="none" stroke-width="1.2" d="M1 3h13v9H1zM3 3V1h2v2M9 3V1h2v2"/></svg>
<div class="t" style="left:1744.00px;top:238.90px;font-size:13.77px;color:#d8d8d8;transform:scaleX(0.8818);">Sheet</div>
<svg class="a" style="left:1703px;top:262px;" width="6" height="9" viewBox="0 0 6 9"><path fill="#cfcfcf" d="M0 0l5.5 4.5L0 9z"/></svg>
<svg class="a" style="left:1723px;top:260px;" width="15" height="13" viewBox="0 0 15 13"><path stroke="#d4d4d4" fill="none" stroke-width="1.2" d="M1 3h13v9H1zM3 3V1h2v2M9 3V1h2v2"/></svg>
<div class="t" style="left:1744.00px;top:258.04px;font-size:13.48px;color:#d8d8d8;transform:scaleX(0.9544);">cDrawing2</div>
<div class="a" style="left:1685px;top:618px;width:314px;height:3px;background:#111111;"></div>
<div class="a" style="left:1685px;top:621px;width:314px;height:22px;background:#1c1c1d;"></div>
<div class="t" style="left:1698.70px;top:622.87px;font-size:13.91px;color:#cfcfcf;transform:scaleX(0.9285);">Properties</div>
<svg class="a" style="left:1963px;top:626px;" width="26" height="11" viewBox="0 0 26 11"><path fill="#f0f0f0" d="M1.5 0h6v1.2H6.8v4.3H8.3v1.6H5.3V11H4.2V7.1H0.7V5.5h1.5V1.2H1.5z"/><path fill="#262727" d="M3.4 1.2h1.2v4.3H3.4z"/><path stroke="#e8e8e8" stroke-width="1.3" d="M17 1.5l8 8M25 1.5l-8 8"/></svg>
<div class="a" style="left:1685px;top:643px;width:209px;height:25px;background:#1b1b1c;"></div>
<div class="a" style="left:1894px;top:643px;width:105px;height:25px;background:#232323;"></div>
<div class="t" style="left:1690.00px;top:649.69px;font-size:13.19px;color:#d4d4d4;transform:scaleX(0.9397);">No selected item.</div>
<svg class="a" style="left:1877px;top:655px;" width="10" height="6" viewBox="0 0 10 6"><path fill="#eeeeee" d="M0 0h10L5 5z"/></svg>
<svg class="a" style="left:1898px;top:648px;" width="98" height="18" viewBox="0 0 98 18"><g fill="none" stroke="#dcdcdc" stroke-width="1.1" stroke-dasharray="2 1"><rect x="1.5" y="1" width="16" height="15.5"/><rect x="27.5" y="1" width="16" height="15.5"/><rect x="53.5" y="1" width="16" height="15.5"/></g><g fill="none" stroke="#dcdcdc" stroke-width="1.2"><rect x="4.5" y="4" width="4" height="4"/><rect x="10.5" y="4" width="4" height="4"/><rect x="4.5" y="10" width="4" height="4"/><rect x="10.5" y="10" width="4" height="4"/><rect x="30.5" y="3.5" width="10" height="10"/></g><path fill="#dcdcdc" d="M35 6h2v6h-2zM58 4l7 6h-3l2 4-1.5.7-2-4-2.5 2z M82 8l8 7h-3l2 4-2 1-2-4-3 3z"/><path fill="#dcdcdc" d="M88 2l8-2-5 6h4l-8 6 2-5h-3z"/></svg>
<div class="a" style="left:1685px;top:668.3px;width:314px;height:19.75px;background:#272828;"></div>
<svg class="a" style="left:1691px;top:675.8px;" width="9" height="9" viewBox="0 0 9 9"><path fill="#2a9e8c" d="M0 8.5L8 0.5v8z"/><path fill="#1a2a28" d="M4 7l3-3v3z"/></svg>
<div class="t" style="left:1708.60px;top:672.40px;font-size:13.77px;color:#e8e8e8;font-weight:bold;transform:scaleX(0.86);">General</div>
<div class="a" style="left:1704.7px;top:688.05px;width:294.3px;height:19.75px;background:#2a2a2a;border-bottom:1px solid #252626;"></div>
<div class="a" style="left:1842.5px;top:688.05px;width:1px;height:19.75px;background:#252626;"></div>
<div class="t" style="left:1708.60px;top:692.15px;font-size:13.77px;color:#dadada;transform:scaleX(0.86);">Color</div>
<div class="a" style="left:1845.6px;top:692.75px;width:11px;height:11px;background:#ffffff;"></div>
<div class="t" style="left:1863.70px;top:692.15px;font-size:13.77px;color:#dadada;transform:scaleX(0.86);">ByLayer</div>
<div class="a" style="left:1704.7px;top:707.8px;width:294.3px;height:19.75px;background:#2a2a2a;border-bottom:1px solid #252626;"></div>
<div class="a" style="left:1842.5px;top:707.8px;width:1px;height:19.75px;background:#252626;"></div>
<div class="t" style="left:1708.60px;top:711.90px;font-size:13.77px;color:#dadada;transform:scaleX(0.86);">Layer</div>
<div class="t" style="left:1847.00px;top:711.90px;font-size:13.77px;color:#dadada;transform:scaleX(0.86);">0</div>
<div class="a" style="left:1704.7px;top:727.55px;width:294.3px;height:19.75px;background:#2a2a2a;border-bottom:1px solid #252626;"></div>
<div class="a" style="left:1842.5px;top:727.55px;width:1px;height:19.75px;background:#252626;"></div>
<div class="t" style="left:1708.60px;top:731.65px;font-size:13.77px;color:#dadada;transform:scaleX(0.86);">Linetype</div>
<div class="a" style="left:1845.6px;top:737.3499999999999px;width:62.5px;height:1.4px;background:#cfcfcf;"></div>
<div class="t" style="left:1915.70px;top:731.65px;font-size:13.77px;color:#dadada;transform:scaleX(0.86);">ByLayer</div>
<div class="a" style="left:1704.7px;top:747.3px;width:294.3px;height:19.75px;background:#2a2a2a;border-bottom:1px solid #252626;"></div>
<div class="a" style="left:1842.5px;top:747.3px;width:1px;height:19.75px;background:#252626;"></div>
<div class="t" style="left:1708.60px;top:751.40px;font-size:13.77px;color:#dadada;transform:scaleX(0.86);">Linetype scale</div>
<div class="t" style="left:1847.00px;top:751.40px;font-size:13.77px;color:#dadada;transform:scaleX(0.86);">1.000000</div>
<div class="a" style="left:1704.7px;top:767.05px;width:294.3px;height:19.75px;background:#2a2a2a;border-bottom:1px solid #252626;"></div>
<div class="a" style="left:1842.5px;top:767.05px;width:1px;height:19.75px;background:#252626;"></div>
<div class="t" style="left:1708.60px;top:771.15px;font-size:13.77px;color:#dadada;transform:scaleX(0.86);">Lineweight</div>
<div class="a" style="left:1845.6px;top:776.8499999999999px;width:62.5px;height:1.4px;background:#cfcfcf;"></div>
<div class="t" style="left:1915.70px;top:771.15px;font-size:13.77px;color:#dadada;transform:scaleX(0.86);">ByLayer</div>
<div class="a" style="left:1704.7px;top:786.8px;width:294.3px;height:19.75px;background:#2a2a2a;border-bottom:1px solid #252626;"></div>
<div class="a" style="left:1842.5px;top:786.8px;width:1px;height:19.75px;background:#252626;"></div>
<div class="t" style="left:1708.60px;top:790.90px;font-size:13.77px;color:#dadada;transform:scaleX(0.86);">Transparency</div>
<div class="t" style="left:1847.00px;top:790.90px;font-size:13.77px;color:#dadada;transform:scaleX(0.86);">ByLayer</div>
<div class="a" style="left:1704.7px;top:806.55px;width:294.3px;height:19.75px;background:#2a2a2a;border-bottom:1px solid #252626;"></div>
<div class="a" style="left:1842.5px;top:806.55px;width:1px;height:19.75px;background:#252626;"></div>
<div class="t" style="left:1708.60px;top:810.65px;font-size:13.77px;color:#dadada;transform:scaleX(0.86);">Thickness</div>
<div class="t" style="left:1847.00px;top:810.65px;font-size:13.77px;color:#dadada;transform:scaleX(0.86);">0</div>
<div class="a" style="left:1685px;top:826.3px;width:314px;height:19.75px;background:#272828;"></div>
<svg class="a" style="left:1691px;top:833.8px;" width="9" height="9" viewBox="0 0 9 9"><path fill="#2a9e8c" d="M0 8.5L8 0.5v8z"/><path fill="#1a2a28" d="M4 7l3-3v3z"/></svg>
<div class="t" style="left:1708.60px;top:830.40px;font-size:13.77px;color:#e8e8e8;font-weight:bold;transform:scaleX(0.86);">View</div>
<div class="a" style="left:1704.7px;top:846.05px;width:294.3px;height:19.75px;background:#2a2a2a;border-bottom:1px solid #252626;"></div>
<div class="a" style="left:1842.5px;top:846.05px;width:1px;height:19.75px;background:#252626;"></div>
<div class="t" style="left:1708.60px;top:850.15px;font-size:13.77px;color:#8c8c8c;transform:scaleX(0.86);">Center X</div>
<div class="t" style="left:1847.00px;top:850.15px;font-size:13.77px;color:#8c8c8c;transform:scaleX(0.86);">47653.1453</div>
<div class="a" style="left:1704.7px;top:865.8px;width:294.3px;height:19.75px;background:#2a2a2a;border-bottom:1px solid #252626;"></div>
<div class="a" style="left:1842.5px;top:865.8px;width:1px;height:19.75px;background:#252626;"></div>
<div class="t" style="left:1708.60px;top:869.90px;font-size:13.77px;color:#8c8c8c;transform:scaleX(0.86);">Center Y</div>
<div class="t" style="left:1847.00px;top:869.90px;font-size:13.77px;color:#8c8c8c;transform:scaleX(0.86);">-17401.8352</div>
<div class="a" style="left:1704.7px;top:885.55px;width:294.3px;height:19.75px;background:#2a2a2a;border-bottom:1px solid #252626;"></div>
<div class="a" style="left:1842.5px;top:885.55px;width:1px;height:19.75px;background:#252626;"></div>
<div class="t" style="left:1708.60px;top:889.65px;font-size:13.77px;color:#8c8c8c;transform:scaleX(0.86);">Center Z</div>
<div class="t" style="left:1847.00px;top:889.65px;font-size:13.77px;color:#8c8c8c;transform:scaleX(0.86);">0.0000</div>
<div class="a" style="left:1704.7px;top:905.3px;width:294.3px;height:19.75px;background:#2a2a2a;border-bottom:1px solid #252626;"></div>
<div class="a" style="left:1842.5px;top:905.3px;width:1px;height:19.75px;background:#252626;"></div>
<div class="t" style="left:1708.60px;top:909.40px;font-size:13.77px;color:#8c8c8c;transform:scaleX(0.86);">Height</div>
<div class="t" style="left:1847.00px;top:909.40px;font-size:13.77px;color:#8c8c8c;transform:scaleX(0.86);">74240.2458</div>
<div class="a" style="left:1704.7px;top:925.05px;width:294.3px;height:19.75px;background:#2a2a2a;border-bottom:1px solid #252626;"></div>
<div class="a" style="left:1842.5px;top:925.05px;width:1px;height:19.75px;background:#252626;"></div>
<div class="t" style="left:1708.60px;top:929.15px;font-size:13.77px;color:#8c8c8c;transform:scaleX(0.86);">Width</div>
<div class="t" style="left:1847.00px;top:929.15px;font-size:13.77px;color:#8c8c8c;transform:scaleX(0.86);">127416.1091</div>
<div class="a" style="left:1685px;top:944.8px;width:314px;height:19.75px;background:#272828;"></div>
<svg class="a" style="left:1691px;top:952.3px;" width="9" height="9" viewBox="0 0 9 9"><path fill="#2a9e8c" d="M0 8.5L8 0.5v8z"/><path fill="#1a2a28" d="M4 7l3-3v3z"/></svg>
<div class="t" style="left:1708.60px;top:948.90px;font-size:13.77px;color:#e8e8e8;font-weight:bold;transform:scaleX(0.86);">Misc</div>
<div class="a" style="left:1704.7px;top:964.55px;width:294.3px;height:19.75px;background:#2a2a2a;border-bottom:1px solid #252626;"></div>
<div class="a" style="left:1842.5px;top:964.55px;width:1px;height:19.75px;background:#252626;"></div>
<div class="t" style="left:1708.60px;top:968.65px;font-size:13.77px;color:#dadada;transform:scaleX(0.86);">Viewport scale</div>
<div class="t" style="left:1847.00px;top:968.65px;font-size:13.77px;color:#dadada;transform:scaleX(0.86);">1:1</div>
<div class="a" style="left:1704.7px;top:984.3px;width:294.3px;height:19.75px;background:#2a2a2a;border-bottom:1px solid #252626;"></div>
<div class="a" style="left:1842.5px;top:984.3px;width:1px;height:19.75px;background:#252626;"></div>
<div class="t" style="left:1708.60px;top:988.40px;font-size:13.77px;color:#dadada;transform:scaleX(0.86);">UCS icon On</div>
<div class="t" style="left:1847.00px;top:988.40px;font-size:13.77px;color:#dadada;transform:scaleX(0.86);">Yes</div>
<div class="a" style="left:1704.7px;top:1004.05px;width:294.3px;height:19.75px;background:#2a2a2a;border-bottom:1px solid #252626;"></div>
<div class="a" style="left:1842.5px;top:1004.05px;width:1px;height:19.75px;background:#252626;"></div>
<div class="t" style="left:1708.60px;top:1008.15px;font-size:13.77px;color:#dadada;transform:scaleX(0.86);">UCS icon at origin</div>
<div class="t" style="left:1847.00px;top:1008.15px;font-size:13.77px;color:#dadada;transform:scaleX(0.86);">Yes</div>
<div class="a" style="left:1704.7px;top:1023.8px;width:294.3px;height:19.75px;background:#2a2a2a;border-bottom:1px solid #252626;"></div>
<div class="a" style="left:1842.5px;top:1023.8px;width:1px;height:19.75px;background:#252626;"></div>
<div class="t" style="left:1708.60px;top:1027.90px;font-size:13.77px;color:#8c8c8c;transform:scaleX(0.86);">UCS per viewport</div>
<div class="t" style="left:1847.00px;top:1027.90px;font-size:13.77px;color:#8c8c8c;transform:scaleX(0.86);">Yes</div>
<div class="a" style="left:1704.7px;top:1043.55px;width:294.3px;height:19.75px;background:#2a2a2a;border-bottom:1px solid #252626;"></div>
<div class="a" style="left:1842.5px;top:1043.55px;width:1px;height:19.75px;background:#252626;"></div>
<div class="t" style="left:1708.60px;top:1047.65px;font-size:13.77px;color:#dadada;transform:scaleX(0.86);">UCS name</div>
<div class="a" style="left:1704.7px;top:1063.3px;width:294.3px;height:19.75px;background:#2a2a2a;border-bottom:1px solid #252626;"></div>
<div class="a" style="left:1842.5px;top:1063.3px;width:1px;height:19.75px;background:#252626;"></div>
<div class="t" style="left:1708.60px;top:1067.40px;font-size:13.77px;color:#8c8c8c;transform:scaleX(0.86);">Visual Style</div>
<div class="t" style="left:1847.00px;top:1067.40px;font-size:13.77px;color:#8c8c8c;transform:scaleX(0.86);">2D Wireframe</div>
<div class="a" style="left:1842.5px;top:1083.05px;width:1px;height:37.950000000000045px;background:#2a2b2b;"></div>
<div class="a" style="left:378px;top:309px;width:1244px;height:563px;background:#000;border:2px solid #939393;"></div>
<div class="a" style="left:392px;top:322px;width:1215.5px;height:58px;background:#444444;"></div>
<div class="t" style="left:414.40px;top:340.71px;font-size:28.70px;color:#d4d4d4;transform:scaleX(0.8418);">Sheet Setting</div>
<svg class="a" style="left:1567px;top:343px;" width="21" height="20" viewBox="0 0 21 20"><path stroke="#ececec" stroke-width="2" d="M1.5 1.5l17 17M18.5 1.5l-17 17"/></svg>
<div class="a" style="left:392px;top:380px;width:1215.5px;height:477px;background:#dedede;"></div>
<div class="a" style="left:392px;top:380px;width:1215.5px;height:2.5px;background:#f0f0f0;"></div>
<div class="a" style="left:392px;top:380px;width:2px;height:473px;background:#8a8a8a;"></div>
<div class="a" style="left:394px;top:380px;width:4px;height:473px;background:#f4f4f4;"></div>
<div class="a" style="left:394px;top:850px;width:1208px;height:2.5px;background:#eeeeee;"></div>
<div class="a" style="left:1600px;top:380px;width:2.5px;height:472.5px;background:#eeeeee;"></div>
<div class="a" style="left:1602.5px;top:380px;width:5.5px;height:478px;background:linear-gradient(to right,#a8a8a8,#303030 70%,#000);"></div>
<div class="a" style="left:392px;top:852.5px;width:1216px;height:5.5px;background:linear-gradient(to bottom,#a8a8a8,#303030 70%,#000);"></div>
<div class="a" style="left:416px;top:450px;width:643px;height:168px;background:transparent;border:2px solid #8e8e8e;"></div>
<div class="a" style="left:701.4px;top:406.7px;width:98.5px;height:45px;background:#dedede;border-left:1.6px solid #7391c4;border-right:1.6px solid #7391c4;"></div>
<div class="a" style="left:701.4px;top:406.7px;width:98.5px;height:3.4px;background:#4a86da;"></div>
<div class="t" style="left:451.00px;top:416.69px;font-size:25.07px;color:#16181c;transform:scaleX(0.9773);">A0</div>
<div class="t" style="left:545.50px;top:416.69px;font-size:25.07px;color:#16181c;transform:scaleX(0.9498);">A1</div>
<div class="t" style="left:639.20px;top:416.69px;font-size:25.07px;color:#16181c;transform:scaleX(1.0047);">A2</div>
<div class="t" style="left:829.20px;top:416.69px;font-size:25.07px;color:#16181c;transform:scaleX(0.9978);">A4</div>
<div class="t" style="left:924.00px;top:416.69px;font-size:25.07px;color:#16181c;transform:scaleX(1.0116);">A5</div>
<div class="t" style="left:734.90px;top:418.22px;font-size:25.51px;color:#16181c;transform:scaleX(0.9640);">A3</div>
<div class="a" style="left:435.2px;top:476.2px;width:610px;height:129.5px;background:transparent;border:1.2px solid #b6b6b6;"></div>
<div class="a" style="left:450px;top:470px;width:107.5px;height:10px;background:#dedede;"></div>
<div class="t" style="left:460.00px;top:463.49px;font-size:25.07px;color:#3a3d46;transform:scaleX(1.0102);">Settings</div>
<div class="t" style="left:449.50px;top:506.57px;font-size:25.80px;color:#3a3d46;transform:scaleX(0.9702);">Sheet Sytle</div>
<div class="a" style="left:721.4px;top:495.9px;width:307.1px;height:46px;background:#e2e2e2;border:1.2px solid #acacac;"></div>
<div class="t" style="left:729.60px;top:506.82px;font-size:25.80px;color:#15171b;transform:scaleX(0.9314);">midas SHEET A3</div>
<svg class="a" style="left:1002px;top:514px;" width="17" height="11" viewBox="0 0 17 11"><path fill="none" stroke="#30333a" stroke-width="1.7" d="M1 1l7.5 9l7.5 -9"/></svg>
<div class="a" style="left:416.4px;top:649.9px;width:640.7px;height:130.1px;background:transparent;border:1.2px solid #b6b6b6;"></div>
<div class="a" style="left:430.6px;top:644px;width:190px;height:12px;background:#dedede;"></div>
<div class="t" style="left:439.90px;top:637.27px;font-size:25.80px;color:#3a3d46;transform:scaleX(0.9684);">General Setting</div>
<div class="t" style="left:452.00px;top:682.57px;font-size:25.22px;color:#3a3d46;transform:scaleX(0.9794);">Sheet Name</div>
<div class="t" style="left:452.00px;top:735.37px;font-size:25.80px;color:#3a3d46;transform:scaleX(0.9710);">Sheet Number</div>
<div class="a" style="left:723.1px;top:669.25px;width:306.2px;height:45.85px;background:#dadada;border:1.2px solid #c2c2c2;"></div>
<div class="a" style="left:728.7px;top:673.9px;width:263.6px;height:36.1px;background:#ffffff;"></div>
<div class="a" style="left:992.3px;top:670.5px;width:1px;height:43.5px;background:#c8c8c8;"></div>
<svg class="a" style="left:1004.3px;top:687.75px;" width="16.8" height="11.2" viewBox="0 0 16.8 11.2"><path fill="none" stroke="#30333a" stroke-width="1.7" d="M1 1l7.4 9.2l7.4 -9.2"/></svg>
<div class="a" style="left:730.5px;top:674.8px;width:196.1px;height:30.5px;background:#0078d7;"></div>
<div class="t" style="left:731.00px;top:678.12px;font-size:25.51px;color:#ffffff;transform:scaleX(1.0167);">[Use View name]</div>
<div class="a" style="left:723.1px;top:722.9px;width:139.3px;height:45.9px;background:#dadada;border:1.2px solid #c2c2c2;"></div>
<div class="a" style="left:728.7px;top:727.5px;width:95.3px;height:35.2px;background:#ffffff;"></div>
<div class="a" style="left:825px;top:724px;width:1px;height:43.5px;background:#c8c8c8;"></div>
<svg class="a" style="left:837px;top:741.4px;" width="16.7" height="11.3" viewBox="0 0 16.7 11.3"><path fill="none" stroke="#30333a" stroke-width="1.7" d="M1 1l7.35 9.3l7.35 -9.3"/></svg>
<div class="t" style="left:731.50px;top:731.84px;font-size:25.36px;color:#15171b;transform:scaleX(0.9646);">C</div>
<div class="a" style="left:892.4px;top:723.8px;width:136px;height:45.4px;background:#ffffff;border-bottom:2.2px solid #6a6a6a;"></div>
<div class="t" style="left:899.40px;top:731.84px;font-size:25.36px;color:#15171b;transform:scaleX(0.9389);">001</div>
<div class="a" style="left:1074.5px;top:447.9px;width:475.5px;height:331.6px;background:transparent;border:1.2px solid #b6b6b6;"></div>
<div class="a" style="left:1089px;top:440px;width:106px;height:12px;background:#dedede;"></div>
<div class="t" style="left:1098.00px;top:434.57px;font-size:25.22px;color:#3a3d46;transform:scaleX(0.9980);">Preview</div>
<div class="a" style="left:1089px;top:469.7px;width:448px;height:291.3px;background:#000000;"></div>
<svg class="a" style="left:1089px;top:469.7px;" width="448" height="291.3" viewBox="0 0 448 291.3"><rect x="36.8" y="13.6" width="377" height="265" fill="none" stroke="#9a9a9a" stroke-width="1.3"/><rect x="49" y="23" width="352.5" height="248" fill="none" stroke="#ececec" stroke-width="1.6"/><path stroke="#f0f0f0" stroke-width="2.2" d="M49 23.5h317M49 271h317"/><path stroke="#cfcfcf" stroke-width="1.3" fill="none" d="M366.3 23v248"/><path stroke="#fff" stroke-width="1.5" d="M88.5 22v3M88.5 269v3"/><path stroke="#fff" stroke-width="1.5" d="M128.0 22v3M128.0 269v3"/><path stroke="#fff" stroke-width="1.5" d="M167.5 22v3M167.5 269v3"/><path stroke="#fff" stroke-width="1.5" d="M207.0 22v3M207.0 269v3"/><path stroke="#fff" stroke-width="1.5" d="M246.5 22v3M246.5 269v3"/><path stroke="#fff" stroke-width="1.5" d="M286.0 22v3M286.0 269v3"/><path stroke="#fff" stroke-width="1.5" d="M325.5 22v3M325.5 269v3"/><path stroke="#fff" stroke-width="1.5" d="M47 54h5M361 54h5"/><path stroke="#fff" stroke-width="1.5" d="M47 85h5M361 85h5"/><path stroke="#fff" stroke-width="1.5" d="M47 115h5M361 115h5"/><path stroke="#fff" stroke-width="1.5" d="M47 145h5M361 145h5"/><path stroke="#fff" stroke-width="1.5" d="M47 175h5M361 175h5"/><path stroke="#fff" stroke-width="1.5" d="M47 205h5M361 205h5"/><path stroke="#fff" stroke-width="1.5" d="M47 236h5M361 236h5"/><path stroke="#d8d8d8" stroke-width="1.5" fill="none" d="M365.5 23v248"/><rect x="366" y="22.5" width="11" height="4" fill="#fff"/><rect x="366" y="54" width="36" height="2.2" fill="#f4f4f4"/><rect x="370" y="59.0" width="32" height="2.3" fill="#e0e0e0"/><rect x="370" y="63.6" width="32" height="2.3" fill="#e0e0e0"/><rect x="370" y="68.2" width="32" height="2.3" fill="#e0e0e0"/><rect x="370" y="72.8" width="32" height="2.3" fill="#e0e0e0"/><rect x="370" y="77.4" width="32" height="2.3" fill="#e0e0e0"/><rect x="370" y="82.0" width="32" height="2.3" fill="#e0e0e0"/><rect x="370" y="86.6" width="32" height="2.3" fill="#e0e0e0"/><rect x="370" y="91.2" width="32" height="2.3" fill="#e0e0e0"/><rect x="370" y="95.8" width="32" height="2.3" fill="#e0e0e0"/><rect x="379" y="59.5" width="12" height="3" fill="#ffffff"/><path stroke="#d8d8d8" stroke-width="1.3" fill="none" d="M369 55v44"/><rect x="366" y="99.5" width="7" height="2" fill="#fff"/><rect x="366" y="145" width="36" height="2.2" fill="#f4f4f4"/><rect x="366" y="157" width="36" height="1.3" fill="#bdbdbd"/><rect x="366" y="167" width="36" height="1.3" fill="#bdbdbd"/><rect x="366" y="178" width="36" height="1.3" fill="#bdbdbd"/><rect x="366" y="188" width="36" height="1.3" fill="#bdbdbd"/><rect x="366" y="199" width="36" height="1.3" fill="#bdbdbd"/><rect x="366" y="235" width="36" height="1.3" fill="#bdbdbd"/><rect x="366" y="245" width="36" height="1.3" fill="#bdbdbd"/><rect x="366" y="146" width="12" height="4" fill="#f0f0f0"/><rect x="366" y="155" width="8" height="3" fill="#f0f0f0"/><rect x="366" y="164" width="9" height="3" fill="#f0f0f0"/><rect x="366" y="174" width="15" height="2.5" fill="#f0f0f0"/><rect x="366" y="178" width="14" height="2.5" fill="#f0f0f0"/><rect x="366" y="186" width="6" height="3" fill="#f0f0f0"/><rect x="366" y="196" width="11" height="3" fill="#f0f0f0"/><rect x="366" y="232" width="7" height="3" fill="#f0f0f0"/><rect x="366" y="241" width="10" height="4" fill="#f0f0f0"/><rect x="366" y="207.5" width="36" height="11" fill="#9c9c9c"/><rect x="375" y="208" width="3" height="2" fill="#222"/><rect x="388" y="212" width="3" height="2" fill="#222"/><rect x="396" y="208" width="3" height="2" fill="#222"/><rect x="380" y="216" width="3" height="2" fill="#222"/><rect x="394" y="216" width="3" height="2" fill="#222"/><rect x="368" y="220" width="34" height="10" fill="#f4f4f4"/><rect x="388" y="223.5" width="11" height="2" fill="#111"/><rect x="366" y="253.5" width="36" height="18" fill="#f4f4f4"/><rect x="373" y="257.5" width="29" height="1.8" fill="#333"/><rect x="373" y="261.5" width="29" height="1.8" fill="#333"/><rect x="373" y="265.5" width="29" height="1.8" fill="#333"/></svg>
<div class="a" style="left:1212px;top:801px;width:175px;height:45px;background:#e1e1e1;border:2px solid #8e8e8e;"></div>
<div class="t" style="left:1284.00px;top:810.33px;font-size:26.09px;color:#2a2e36;transform:scaleX(0.8443);">OK</div>
<div class="a" style="left:1393.5px;top:801px;width:177px;height:45px;background:#e1e1e1;border:2px solid #8e8e8e;"></div>
<div class="t" style="left:1445.70px;top:810.33px;font-size:26.09px;color:#2a2e36;transform:scaleX(0.9179);">Cancel</div>
</body></html>
